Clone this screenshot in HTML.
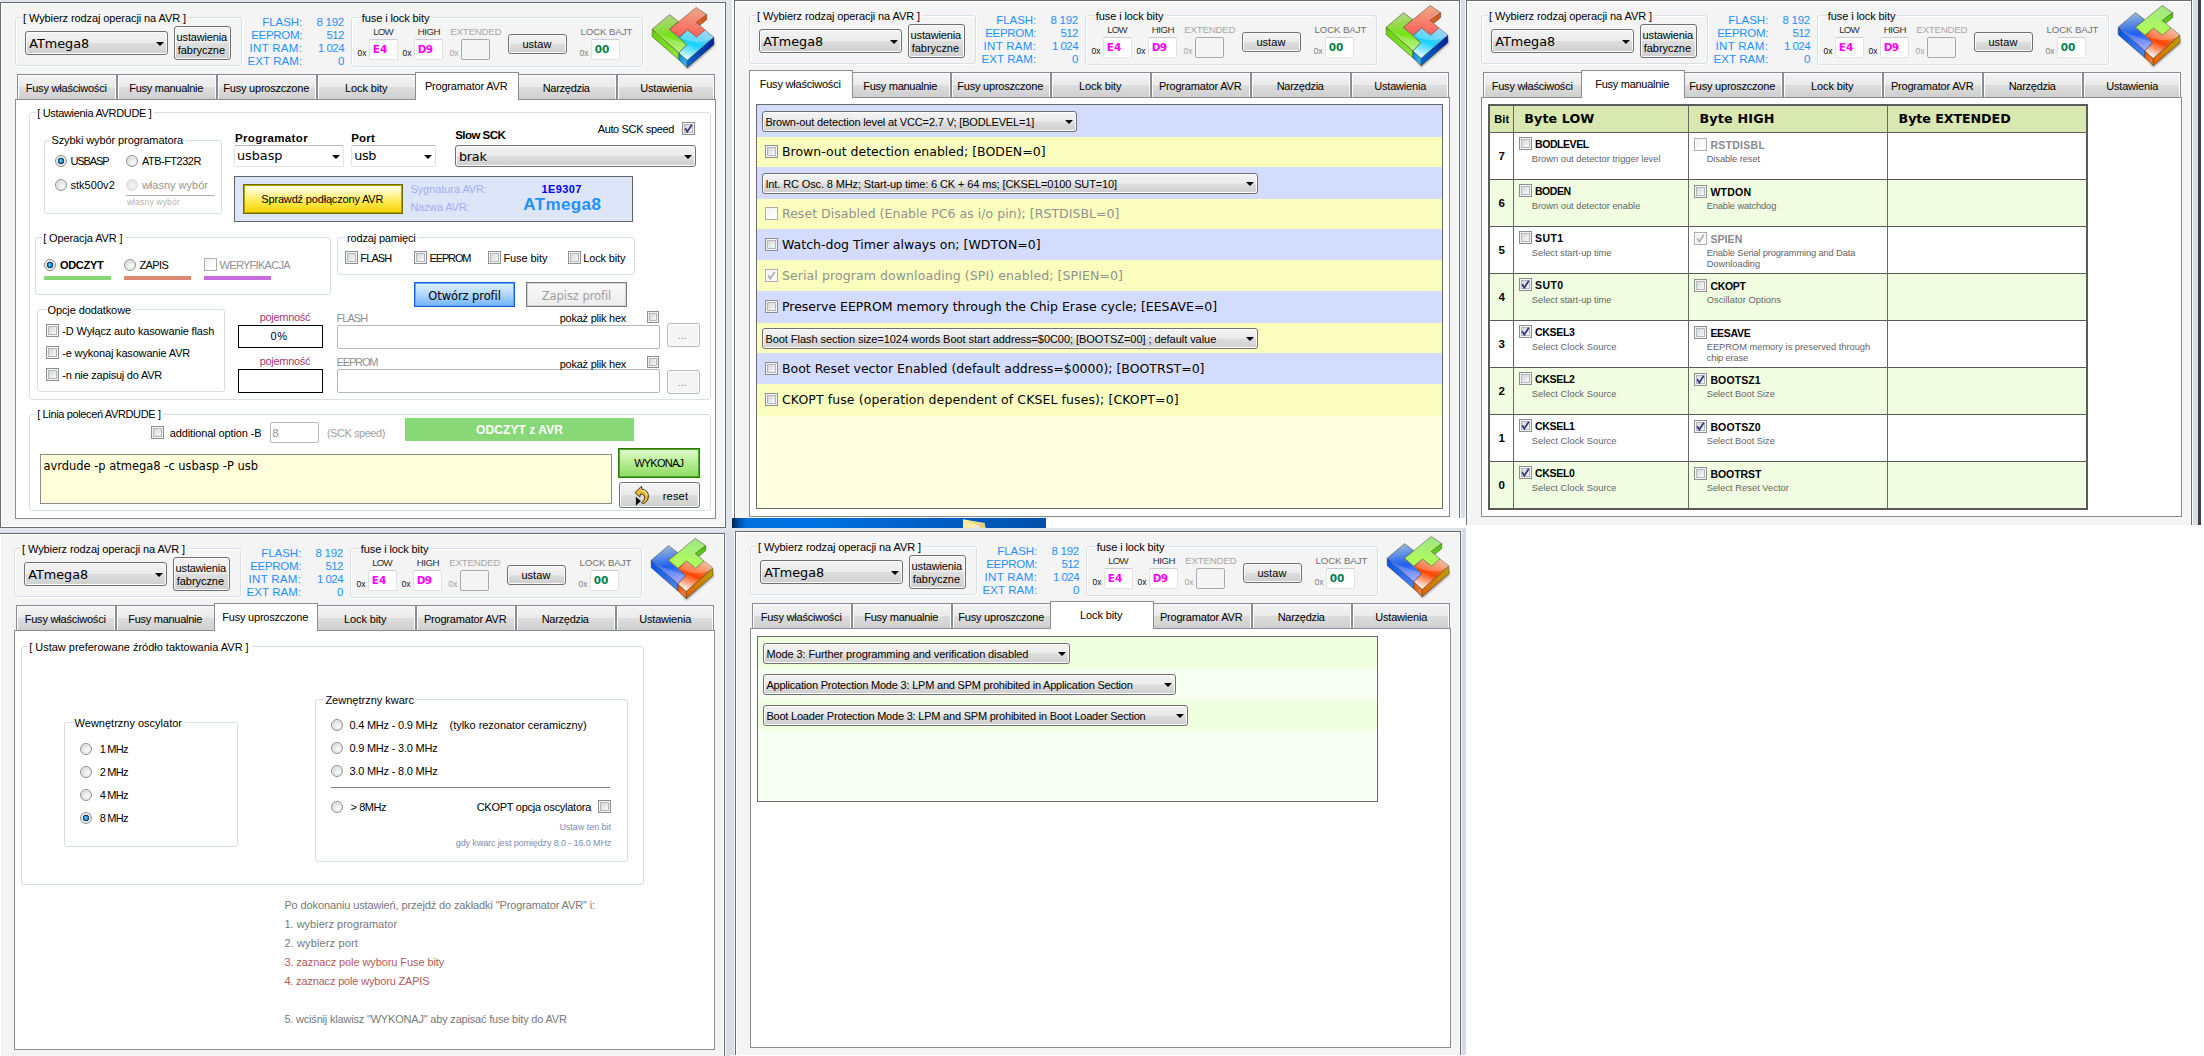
<!DOCTYPE html><html><head><meta charset="utf-8"><title>AVR fuse tool</title><style>html,body{margin:0;padding:0;background:#fff}
body{width:2204px;height:1056px;position:relative;overflow:hidden;font-family:"Liberation Sans",sans-serif;font-size:11px;color:#000}
div,span,i,svg{position:absolute;box-sizing:border-box}
.t{white-space:nowrap;line-height:20px;height:20px}
.win{background:#f4f4f4;overflow:hidden}
.winb{left:0;top:0;width:100%;border:1px solid #696d72;box-shadow:inset 1px 1px 0 #fff,inset -1px -1px 0 #fff}
.gb{border:1px solid #d5dfe5;border-radius:3px;box-shadow:inset 1px 1px 0 #fff,1px 1px 0 #fff}
.btn{border:1px solid #707070;border-radius:3px;background:linear-gradient(#f3f3f3 0%,#ebebeb 48%,#dddddd 52%,#cfcfcf 100%);box-shadow:inset 0 0 0 1px #fcfcfc}
.arr{width:0;height:0;margin-left:-.5px;border-left:4px solid transparent;border-right:4px solid transparent;border-top:4.5px solid #000}
.tabpanel{background:#fff;border:1px solid #898c95}
.tab{border:1px solid #898c95;border-bottom:none;background:linear-gradient(#f3f3f3 0%,#ebebeb 48%,#dddddd 52%,#cfcfcf 100%);box-shadow:inset 1px 1px 0 #fcfcfc,inset -1px 0 0 #fcfcfc}
.tab.act{background:#fff;box-shadow:none}
.hex{background:#fff;border:1px solid #dfe3e8;border-top-color:#c8ccd3;border-radius:2px}
.hex.dis{background:#f4f4f4;border-color:#a9a9a9}
.combo{background:#fff;border:1px solid #dfe4ea;border-top-color:#b3b8c2;border-radius:2px}
.inp{background:#fff;border:1px solid #b4b6ba;border-radius:2px}
.ybtn{border:1px solid #6f6a00;box-shadow:inset 0 0 0 1px #b4a400;background:linear-gradient(#fffef2 0%,#fff7b0 28%,#ffe94e 60%,#f0d000 100%)}
.bbtn{border:1px solid #1460d6;background:linear-gradient(#e0f0ff 0%,#b6daff 45%,#72b4fa 100%);box-shadow:inset 0 0 0 1px #5ea6f6}
.gbtn{border:1px solid #7c7c7c;background:linear-gradient(#fafafa,#ececec);box-shadow:inset 0 0 0 1px #cfcfcf}
.grbtn{border:1px solid #2c7c0a;box-shadow:inset 0 0 0 1px #52a824;background:linear-gradient(#e2f9d4 0%,#b6ec92 50%,#8cdc60 100%)}
.dbtn{background:#f4f4f4;border:1px solid #b6babe;border-radius:3px;box-shadow:inset 0 0 0 1px #fcfcfc}
.cb{width:13px;height:13px;border:1px solid #8e8f8f;background:linear-gradient(135deg,#cbced1 0%,#f9f9f9 85%);box-shadow:inset 0 0 0 1px #f4f4f4,inset 0 0 0 2px #b2b7bc}
.cb.s12{width:12px;height:12px}
.cb.dis{border-color:#adadad;background:linear-gradient(135deg,#efefef 0%,#fdfdfd 70%);box-shadow:inset 0 0 0 1px #fafafa}
.rb{width:12px;height:12px;border:1px solid #8e8f8f;border-radius:50%;background:radial-gradient(circle at 62% 62%,#fdfdfd 0%,#dcdee0 60%,#c2c5c8 100%);box-shadow:inset 0 0 0 1px #eeeeee}
.rb.on{background:radial-gradient(circle closest-side at 44% 40%,rgba(255,255,255,.75) 0,rgba(255,255,255,0) 24%),radial-gradient(circle closest-side at 50% 50%,#5cc4f0 0%,#27a2e0 26%,#1b78b2 42%,#0e3b5e 55%,#173f5a 64%,#f2f2f2 72%,#e0e3e6 100%)}
.rb.dis{border-color:#dcdcdc;background:radial-gradient(circle at 55% 60%,#f6f6f6 0%,#e6e6e6 60%,#dedede 100%);box-shadow:none}
</style></head><body><div style="left:0;top:0;width:732px;height:528px;background:#e0e4eb"></div>
<div style="left:0;top:528px;width:735px;height:528px;background:#d9dee7"></div>
<div style="left:0;top:528px;width:1466px;height:3px;background:#e0e4eb"></div>
<div style="left:725px;top:534px;width:1px;height:522px;background:#f4f6f8"></div>
<div style="left:734px;top:532px;width:1px;height:524px;background:#f4f6f8"></div>
<div style="left:1461px;top:0;width:4px;height:518px;background:#d8dee7"></div>
<div style="left:1461px;top:531px;width:1px;height:525px;background:#f2f4f7"></div><div style="left:1462px;top:528px;width:4px;height:528px;background:#d6dbe4"></div>
<div style="left:2193px;top:0;width:5px;height:525px;background:#d8dee7"></div>
<div style="left:2198px;top:0;width:3px;height:525px;background:#40424a"></div>
<div class="win" style="left:0px;top:2px;width:726px;height:526px"><div class="winb" style="height:526px"></div><div class="gb" style="left:15px;top:15px;width:227px;height:49px;"></div><div style="left:22px;top:14px;width:166px;height:4px;background:#f4f4f4;"></div><span class="t" style="left:23.00px;top:6.19px;font-family:'Liberation Sans',sans-serif;font-size:11px;letter-spacing:-0.09px">[ Wybierz rodzaj operacji na AVR ]</span><div class="btn" style="left:25px;top:29px;width:143px;height:24px;"></div><span class="t" style="left:29.20px;top:32.17px;font-family:'DejaVu Sans','Liberation Sans',sans-serif;font-size:12.8px;">ATmega8</span><i class="arr" style="left:156px;top:40px"></i><div class="btn" style="left:174px;top:24px;width:57px;height:34px;"></div><span class="t" style="left:176.60px;top:24.69px;font-family:'Liberation Sans',sans-serif;font-size:11px;letter-spacing:-0.16px">ustawienia</span><span class="t" style="left:177.80px;top:37.69px;font-family:'Liberation Sans',sans-serif;font-size:11px;letter-spacing:-0.06px">fabryczne</span><span class="t" style="left:262.20px;top:9.72px;font-family:'Liberation Sans',sans-serif;font-size:11.5px;color:#1e90ff;letter-spacing:-0.04px">FLASH:</span><span class="t" style="left:316.40px;top:9.72px;font-family:'Liberation Sans',sans-serif;font-size:11.5px;color:#1e90ff;letter-spacing:-0.24px">8 192</span><span class="t" style="left:251.20px;top:22.82px;font-family:'Liberation Sans',sans-serif;font-size:11.5px;color:#1e90ff;letter-spacing:-0.29px">EEPROM:</span><span class="t" style="left:326.40px;top:22.82px;font-family:'Liberation Sans',sans-serif;font-size:11.5px;color:#1e90ff;letter-spacing:-0.53px">512</span><span class="t" style="left:249.60px;top:35.92px;font-family:'Liberation Sans',sans-serif;font-size:11.5px;color:#1e90ff;letter-spacing:0.29px">INT RAM:</span><span class="t" style="left:318.00px;top:35.92px;font-family:'Liberation Sans',sans-serif;font-size:11.5px;color:#1e90ff;letter-spacing:-0.56px">1 024</span><span class="t" style="left:247.60px;top:49.02px;font-family:'Liberation Sans',sans-serif;font-size:11.5px;color:#1e90ff;letter-spacing:0.06px">EXT RAM:</span><span class="t" style="left:338.00px;top:49.02px;font-family:'Liberation Sans',sans-serif;font-size:11.5px;color:#1e90ff;letter-spacing:-0.41px">0</span><div class="gb" style="left:351px;top:15px;width:292px;height:50px;"></div><div style="left:360.8px;top:14px;width:70.5px;height:4px;background:#f4f4f4;"></div><span class="t" style="left:361.80px;top:6.19px;font-family:'Liberation Sans',sans-serif;font-size:11px;letter-spacing:-0.10px">fuse i lock bity</span><span class="t" style="left:373.20px;top:20.14px;font-family:'Liberation Sans',sans-serif;font-size:9.7px;color:#303030;letter-spacing:-0.76px">LOW</span><span class="t" style="left:417.70px;top:20.14px;font-family:'Liberation Sans',sans-serif;font-size:9.7px;color:#303030;letter-spacing:-0.43px">HIGH</span><span class="t" style="left:450.30px;top:20.14px;font-family:'Liberation Sans',sans-serif;font-size:9.7px;color:#a8a8a8;letter-spacing:-0.23px">EXTENDED</span><span class="t" style="left:580.50px;top:20.14px;font-family:'Liberation Sans',sans-serif;font-size:9.7px;color:#727272;letter-spacing:-0.12px">LOCK BAJT</span><div class="hex" style="left:369px;top:37px;width:29px;height:21px;"></div><span class="t" style="left:357.60px;top:40.55px;font-family:'Liberation Sans',sans-serif;font-size:8.5px;color:#101010;letter-spacing:-0.14px">0x</span><span class="t" style="left:372.70px;top:37.37px;font-family:'DejaVu Sans','Liberation Sans',sans-serif;font-size:10.5px;font-weight:700;color:#ff00ff;letter-spacing:0.06px">E4</span><div class="hex" style="left:414px;top:37px;width:29px;height:21px;"></div><span class="t" style="left:402.60px;top:40.55px;font-family:'Liberation Sans',sans-serif;font-size:8.5px;color:#101010;letter-spacing:-0.14px">0x</span><span class="t" style="left:417.70px;top:37.37px;font-family:'DejaVu Sans','Liberation Sans',sans-serif;font-size:10.5px;font-weight:700;color:#ff00ff;letter-spacing:-0.72px">D9</span><div class="hex dis" style="left:461px;top:37px;width:29px;height:21px;"></div><span class="t" style="left:449.60px;top:40.55px;font-family:'Liberation Sans',sans-serif;font-size:8.5px;color:#a4a4a4;letter-spacing:-0.14px">0x</span><div class="hex" style="left:591px;top:37px;width:29px;height:21px;"></div><span class="t" style="left:579.60px;top:40.55px;font-family:'Liberation Sans',sans-serif;font-size:8.5px;color:#808080;letter-spacing:-0.14px">0x</span><span class="t" style="left:594.70px;top:37.37px;font-family:'DejaVu Sans','Liberation Sans',sans-serif;font-size:10.5px;font-weight:700;color:#008050;letter-spacing:-0.01px">00</span><div class="btn" style="left:508px;top:32px;width:59px;height:20px;"></div><span class="t" style="left:522.40px;top:32.19px;font-family:'Liberation Sans',sans-serif;font-size:11px;letter-spacing:0.05px">ustaw</span><svg style="position:absolute;left:645px;top:0px" width="80" height="72" viewBox="0 0 1173 1056">
<defs>
<linearGradient id="lta" x1="0.45" y1="0" x2="0.55" y2="1"><stop offset="0" stop-color="#b9d48e"/><stop offset="0.55" stop-color="#74e214"/><stop offset="1" stop-color="#a6f26a"/></linearGradient>
<linearGradient id="lfa" x1="0" y1="0" x2="1" y2="1"><stop offset="0" stop-color="#62d400"/><stop offset="1" stop-color="#8fe640"/></linearGradient>
<linearGradient id="tta" x1="0.6" y1="0" x2="0.5" y2="1"><stop offset="0" stop-color="#eda886"/><stop offset="1" stop-color="#ff5f58"/></linearGradient>
<linearGradient id="tsa" x1="0" y1="0" x2="1" y2="0.3"><stop offset="0" stop-color="#e8742e"/><stop offset="1" stop-color="#d85010"/></linearGradient>
<linearGradient id="bta" x1="0.7" y1="0" x2="0.25" y2="1"><stop offset="0" stop-color="#8cc6ee"/><stop offset="0.5" stop-color="#16d2ff"/><stop offset="0.95" stop-color="#dff8ff"/></linearGradient>
<linearGradient id="bra" x1="1" y1="0" x2="0" y2="1"><stop offset="0" stop-color="#00189a"/><stop offset="1" stop-color="#0070d0"/></linearGradient>
<linearGradient id="bfa" x1="0" y1="0" x2="1" y2="1"><stop offset="0" stop-color="#0088dc"/><stop offset="1" stop-color="#48bdf2"/></linearGradient>
<filter id="sha" x="-10%" y="-10%" width="120%" height="125%"><feGaussianBlur stdDeviation="14"/></filter>
</defs>
<path d="M110 470 L497 815 L620 985 L1018 640 L1012 560 L620 900 L497 790 Z" fill="#000" opacity="0.4" filter="url(#sha)"/>
<g stroke="#3b3320" stroke-opacity="0.75" stroke-width="9" stroke-linejoin="round">
<path d="M105 400 L497 748 L497 850 L105 508 Z" fill="url(#lfa)"/>
<path d="M497 748 L620 855 L620 960 L497 850 Z" fill="url(#bfa)"/>
<path d="M620 855 L1010 515 L1010 625 L620 960 Z" fill="url(#bra)"/>
<path d="M105 400 L360 185 L492 287 L358 403 L612 628 L497 748 Z" fill="url(#lta)"/>
<path d="M500 515 L625 410 L755 515 L880 410 L1010 515 L620 855 L497 748 L612 628 Z" fill="url(#bta)"/>
<path d="M750 300 L905 185 L905 255 L812 338 Z" fill="url(#tsa)"/>
<path d="M360 400 L750 80 L905 185 L750 300 L880 410 L755 515 L625 410 L500 515 Z" fill="url(#tta)"/>
</g>
<path d="M130 440 Q400 560 600 615 L497 730 Z" fill="#fff" opacity="0.18"/>
<path d="M520 525 Q760 650 990 530 L1010 515 L880 410 L755 515 L625 410 Z" fill="#fff" opacity="0.22"/>
</svg><div class="tabpanel" style="left:15px;top:97px;width:701px;height:420px;"></div><div class="tab" style="left:17px;top:72px;width:100px;height:25px;"></div><span class="t" style="left:25.70px;top:75.79px;font-family:'Liberation Sans',sans-serif;font-size:11px;letter-spacing:-0.21px">Fusy właściwości</span><div class="tab" style="left:117px;top:72px;width:100px;height:25px;"></div><span class="t" style="left:129.30px;top:75.79px;font-family:'Liberation Sans',sans-serif;font-size:11px;letter-spacing:-0.28px">Fusy manualnie</span><div class="tab" style="left:217px;top:72px;width:100px;height:25px;"></div><span class="t" style="left:223.30px;top:75.79px;font-family:'Liberation Sans',sans-serif;font-size:11px;letter-spacing:-0.22px">Fusy uproszczone</span><div class="tab" style="left:317px;top:72px;width:100px;height:25px;"></div><span class="t" style="left:345.05px;top:75.79px;font-family:'Liberation Sans',sans-serif;font-size:11px;letter-spacing:-0.12px">Lock bity</span><div class="tab" style="left:517px;top:72px;width:100px;height:25px;"></div><span class="t" style="left:542.70px;top:75.79px;font-family:'Liberation Sans',sans-serif;font-size:11px;letter-spacing:-0.28px">Narzędzia</span><div class="tab" style="left:617px;top:72px;width:98px;height:25px;"></div><span class="t" style="left:640.35px;top:75.79px;font-family:'Liberation Sans',sans-serif;font-size:11px;letter-spacing:-0.21px">Ustawienia</span><div class="tab act" style="left:415px;top:70px;width:104px;height:28px;"></div><span class="t" style="left:424.90px;top:73.79px;font-family:'Liberation Sans',sans-serif;font-size:11px;letter-spacing:-0.19px">Programator AVR</span><div class="gb" style="left:29px;top:110px;width:682px;height:288px;"></div><div style="left:36.2px;top:109px;width:117.4px;height:4px;background:#fff;"></div><span class="t" style="left:37.20px;top:101.19px;font-family:'Liberation Sans',sans-serif;font-size:11px;letter-spacing:-0.32px">[ Ustawienia AVRDUDE ]</span><div class="gb" style="left:44px;top:138px;width:178px;height:74px;"></div><div style="left:50.4px;top:137px;width:134.7px;height:4px;background:#fff;"></div><span class="t" style="left:51.40px;top:128.49px;font-family:'Liberation Sans',sans-serif;font-size:11px;letter-spacing:-0.09px">Szybki wybór programatora</span><div class="rb on" style="left:55px;top:153px"></div><span class="t" style="left:70.40px;top:149.19px;font-family:'Liberation Sans',sans-serif;font-size:11px;letter-spacing:-1.11px">USBASP</span><div class="rb" style="left:126px;top:153px"></div><span class="t" style="left:141.90px;top:149.19px;font-family:'Liberation Sans',sans-serif;font-size:11px;letter-spacing:-0.50px">ATB-FT232R</span><div class="rb" style="left:55px;top:177px"></div><span class="t" style="left:70.40px;top:173.19px;font-family:'Liberation Sans',sans-serif;font-size:11px;letter-spacing:0.05px">stk500v2</span><div class="rb dis" style="left:126px;top:177px"></div><span class="t" style="left:141.90px;top:173.19px;font-family:'Liberation Sans',sans-serif;font-size:11px;color:#959595;">własny wybór</span><div style="left:126px;top:193px;width:89px;height:1px;background:#aeaeae;"></div><span class="t" style="left:126.90px;top:189.55px;font-family:'Liberation Sans',sans-serif;font-size:8.5px;color:#b4b4b4;letter-spacing:0.16px">własny wybór</span><span class="t" style="left:235.00px;top:126.02px;font-family:'Liberation Sans',sans-serif;font-size:11.5px;font-weight:700;letter-spacing:0.36px">Programator</span><div class="combo" style="left:234px;top:143px;width:110px;height:22px;"></div><span class="t" style="left:237.00px;top:144.07px;font-family:'DejaVu Sans','Liberation Sans',sans-serif;font-size:12.8px;letter-spacing:-0.02px">usbasp</span><i class="arr" style="left:332px;top:153px"></i><span class="t" style="left:351.30px;top:126.02px;font-family:'Liberation Sans',sans-serif;font-size:11.5px;font-weight:700;letter-spacing:0.15px">Port</span><div class="combo" style="left:351px;top:143px;width:85px;height:22px;"></div><span class="t" style="left:354.20px;top:144.07px;font-family:'DejaVu Sans','Liberation Sans',sans-serif;font-size:12.8px;letter-spacing:-0.30px">usb</span><i class="arr" style="left:424px;top:153px"></i><span class="t" style="left:455.20px;top:123.02px;font-family:'Liberation Sans',sans-serif;font-size:11.5px;font-weight:700;letter-spacing:-0.54px">Slow SCK</span><div class="btn" style="left:455px;top:143px;width:241px;height:22px;"></div><span class="t" style="left:458.90px;top:144.57px;font-family:'DejaVu Sans','Liberation Sans',sans-serif;font-size:12.8px;letter-spacing:-0.21px">brak</span><i class="arr" style="left:684px;top:153px"></i><span class="t" style="left:597.70px;top:116.89px;font-family:'Liberation Sans',sans-serif;font-size:11px;letter-spacing:-0.36px">Auto SCK speed</span><div class="cb" style="left:682px;top:120px"><svg width="13" height="13" viewBox="0 0 13 13" style="position:absolute;left:-1px;top:-1px"><path d="M3.2 6.2 L5.3 9.6 L9.8 2.8" fill="none" stroke="#31347c" stroke-width="1.7" stroke-linecap="butt"/></svg></div><div style="left:234px;top:174px;width:399px;height:46px;background:#dde6f8;border:1px solid #646464;"></div><div class="ybtn" style="left:243px;top:182px;width:160px;height:30px;"></div><span class="t" style="left:261.30px;top:187.19px;font-family:'Liberation Sans',sans-serif;font-size:11px;letter-spacing:-0.17px">Sprawdź podłączony AVR</span><span class="t" style="left:410.40px;top:177.19px;font-family:'Liberation Sans',sans-serif;font-size:11px;color:#a4acf0;letter-spacing:-0.06px">Sygnatura AVR:</span><span class="t" style="left:410.40px;top:195.19px;font-family:'Liberation Sans',sans-serif;font-size:11px;color:#a4acf0;letter-spacing:-0.21px">Nazwa AVR:</span><span class="t" style="left:541.50px;top:177.19px;font-family:'Liberation Sans',sans-serif;font-size:11px;font-weight:700;color:#0000ff;letter-spacing:0.38px">1E9307</span><span class="t" style="left:523.30px;top:193.31px;font-family:'Liberation Sans',sans-serif;font-size:17px;font-weight:700;color:#1e90ff;letter-spacing:0.39px">ATmega8</span><div class="gb" style="left:35px;top:235px;width:296px;height:58px;"></div><div style="left:42.2px;top:234px;width:82.3px;height:4px;background:#fff;"></div><span class="t" style="left:43.20px;top:226.19px;font-family:'Liberation Sans',sans-serif;font-size:11px;letter-spacing:-0.11px">[ Operacja AVR ]</span><div class="rb on" style="left:44px;top:257px"></div><span class="t" style="left:59.90px;top:253.19px;font-family:'Liberation Sans',sans-serif;font-size:11px;font-weight:700;letter-spacing:-0.29px">ODCZYT</span><div style="left:44px;top:274px;width:67px;height:4px;background:#86d674;"></div><div class="rb" style="left:124px;top:257px"></div><span class="t" style="left:139.50px;top:253.19px;font-family:'Liberation Sans',sans-serif;font-size:11px;letter-spacing:-0.62px">ZAPIS</span><div style="left:124px;top:274px;width:67px;height:4px;background:#dc8870;"></div><div class="cb dis" style="left:204px;top:256px"></div><span class="t" style="left:219.60px;top:253.19px;font-family:'Liberation Sans',sans-serif;font-size:11px;color:#909090;letter-spacing:-0.70px">WERYFIKACJA</span><div style="left:204px;top:274px;width:67px;height:4px;background:#c86ae0;"></div><div class="gb" style="left:337px;top:235px;width:298px;height:38px;"></div><div style="left:346.1px;top:234px;width:71.5px;height:4px;background:#fff;"></div><span class="t" style="left:347.10px;top:226.19px;font-family:'Liberation Sans',sans-serif;font-size:11px;letter-spacing:-0.17px">rodzaj pamięci</span><div class="cb" style="left:345px;top:249px"></div><span class="t" style="left:360.30px;top:246.19px;font-family:'Liberation Sans',sans-serif;font-size:11px;letter-spacing:-0.87px">FLASH</span><div class="cb" style="left:414px;top:249px"></div><span class="t" style="left:429.50px;top:246.19px;font-family:'Liberation Sans',sans-serif;font-size:11px;letter-spacing:-1.13px">EEPROM</span><div class="cb" style="left:488px;top:249px"></div><span class="t" style="left:503.40px;top:246.19px;font-family:'Liberation Sans',sans-serif;font-size:11px;letter-spacing:-0.08px">Fuse bity</span><div class="cb" style="left:568px;top:249px"></div><span class="t" style="left:583.30px;top:246.19px;font-family:'Liberation Sans',sans-serif;font-size:11px;letter-spacing:-0.15px">Lock bity</span><div class="bbtn" style="left:414px;top:280px;width:101px;height:25px;"></div><span class="t" style="left:428.25px;top:283.52px;font-family:'DejaVu Sans','Liberation Sans',sans-serif;font-size:11.5px;letter-spacing:-0.09px">Otwórz profil</span><div class="gbtn" style="left:526px;top:280px;width:101px;height:25px;"></div><span class="t" style="left:541.80px;top:283.52px;font-family:'DejaVu Sans','Liberation Sans',sans-serif;font-size:11.5px;color:#a0a0a0;letter-spacing:-0.07px">Zapisz profil</span><div class="gb" style="left:37px;top:307px;width:188px;height:83px;"></div><div style="left:46.5px;top:306px;width:86.5px;height:4px;background:#fff;"></div><span class="t" style="left:47.50px;top:298.19px;font-family:'Liberation Sans',sans-serif;font-size:11px;letter-spacing:-0.10px">Opcje dodatkowe</span><div class="cb" style="left:46px;top:322px"></div><span class="t" style="left:62.30px;top:319.19px;font-family:'Liberation Sans',sans-serif;font-size:11px;letter-spacing:-0.13px">-D Wyłącz auto kasowanie flash</span><div class="cb" style="left:46px;top:344px"></div><span class="t" style="left:62.30px;top:341.19px;font-family:'Liberation Sans',sans-serif;font-size:11px;letter-spacing:-0.17px">-e wykonaj kasowanie AVR</span><div class="cb" style="left:46px;top:366px"></div><span class="t" style="left:62.30px;top:363.19px;font-family:'Liberation Sans',sans-serif;font-size:11px;letter-spacing:-0.22px">-n nie zapisuj do AVR</span><span class="t" style="left:259.70px;top:305.19px;font-family:'Liberation Sans',sans-serif;font-size:11px;color:#a03878;letter-spacing:-0.29px">pojemność</span><div style="left:238px;top:323px;width:85px;height:23px;background:#fff;border:1px solid #000;"></div><span class="t" style="left:270.40px;top:324.49px;font-family:'Liberation Sans',sans-serif;font-size:11px;letter-spacing:0.75px">0%</span><span class="t" style="left:259.70px;top:349.49px;font-family:'Liberation Sans',sans-serif;font-size:11px;color:#a03878;letter-spacing:-0.29px">pojemność</span><div style="left:238px;top:367px;width:85px;height:24px;background:#fff;border:1px solid #000;"></div><span class="t" style="left:336.50px;top:306.19px;font-family:'Liberation Sans',sans-serif;font-size:11px;color:#909090;letter-spacing:-0.95px">FLASH</span><div class="inp" style="left:337px;top:323px;width:323px;height:24px;"></div><span class="t" style="left:559.70px;top:306.19px;font-family:'Liberation Sans',sans-serif;font-size:11px;letter-spacing:-0.24px">pokaż plik hex</span><div class="cb s12" style="left:647px;top:309px"></div><div class="dbtn" style="left:667px;top:321px;width:33px;height:24px;"></div><span class="t" style="left:677.50px;top:323.19px;font-family:'Liberation Sans',sans-serif;font-size:11px;color:#909090;letter-spacing:-0.06px">...</span><span class="t" style="left:336.50px;top:350.49px;font-family:'Liberation Sans',sans-serif;font-size:11px;color:#909090;letter-spacing:-1.13px">EEPROM</span><div class="inp" style="left:337px;top:367px;width:323px;height:24px;"></div><span class="t" style="left:559.70px;top:351.69px;font-family:'Liberation Sans',sans-serif;font-size:11px;letter-spacing:-0.24px">pokaż plik hex</span><div class="cb s12" style="left:647px;top:354px"></div><div class="dbtn" style="left:667px;top:368px;width:33px;height:24px;"></div><span class="t" style="left:677.50px;top:370.19px;font-family:'Liberation Sans',sans-serif;font-size:11px;color:#909090;letter-spacing:-0.06px">...</span><div class="gb" style="left:29px;top:412px;width:682px;height:97px;"></div><div style="left:36.2px;top:411px;width:126.6px;height:4px;background:#fff;"></div><span class="t" style="left:37.20px;top:402.19px;font-family:'Liberation Sans',sans-serif;font-size:11px;letter-spacing:-0.36px">[ Linia poleceń AVRDUDE ]</span><div class="cb" style="left:151px;top:424px"></div><span class="t" style="left:169.80px;top:420.89px;font-family:'Liberation Sans',sans-serif;font-size:11px;letter-spacing:-0.13px">additional option -B</span><div class="inp" style="left:270px;top:420px;width:49px;height:21px;"></div><span class="t" style="left:272.60px;top:420.89px;font-family:'Liberation Sans',sans-serif;font-size:11px;color:#909090;letter-spacing:-0.25px">8</span><span class="t" style="left:326.90px;top:420.89px;font-family:'Liberation Sans',sans-serif;font-size:11px;color:#a0a0a0;letter-spacing:-0.45px">(SCK speed)</span><div style="left:405px;top:416px;width:229px;height:23px;background:#88d878;"></div><span class="t" style="left:476.10px;top:417.84px;font-family:'Liberation Sans',sans-serif;font-size:12px;font-weight:700;color:#fff;letter-spacing:0.08px">ODCZYT z AVR</span><div style="left:40px;top:452px;width:572px;height:50px;background:#ffffdc;border:1px solid #8c8c8c;"></div><span class="t" style="left:43.40px;top:453.52px;font-family:'DejaVu Sans','Liberation Sans',sans-serif;font-size:11.5px;letter-spacing:-0.02px">avrdude -p atmega8 -c usbasp -P usb</span><div class="grbtn" style="left:618px;top:446px;width:82px;height:30px;"></div><span class="t" style="left:634.20px;top:451.19px;font-family:'Liberation Sans',sans-serif;font-size:11px;letter-spacing:-0.77px">WYKONAJ</span><div class="btn" style="left:619px;top:480px;width:81px;height:26px;"></div><svg style="position:absolute;left:633px;top:482px" width="18" height="23" viewBox="0 0 18 23"><path d="M8.6 2.2 L2.0 8.7 L6.8 12.8 L7.4 10.2 C10 9.6 12.2 11.4 11.6 14.2 C11.2 16.2 10 17.6 8.6 18.6 L10.4 19.6 C13.6 18.2 15.6 15.2 15.4 11.8 C15.2 8 12.4 5.4 8.8 5.2 Z" fill="#eeb838" stroke="#2c2410" stroke-width="0.9" stroke-linejoin="round"/><path d="M7.6 6.4 C11 6.2 13.6 8.4 14 11.4" fill="none" stroke="#fbe6a0" stroke-width="1.2"/><path d="M2.9 12.8 L2.9 21.7 L7.9 17 Z" fill="#0a0a0a"/></svg><span class="t" style="left:662.70px;top:483.69px;font-family:'Liberation Sans',sans-serif;font-size:11px;letter-spacing:0.21px">reset</span></div><div class="win" style="left:734px;top:0px;width:726px;height:518px"><div class="winb" style="height:526px"></div><div class="gb" style="left:15px;top:15px;width:227px;height:49px;"></div><div style="left:22px;top:14px;width:166px;height:4px;background:#f4f4f4;"></div><span class="t" style="left:23.00px;top:6.19px;font-family:'Liberation Sans',sans-serif;font-size:11px;letter-spacing:-0.09px">[ Wybierz rodzaj operacji na AVR ]</span><div class="btn" style="left:25px;top:29px;width:143px;height:24px;"></div><span class="t" style="left:29.20px;top:32.17px;font-family:'DejaVu Sans','Liberation Sans',sans-serif;font-size:12.8px;">ATmega8</span><i class="arr" style="left:156px;top:40px"></i><div class="btn" style="left:174px;top:24px;width:57px;height:34px;"></div><span class="t" style="left:176.60px;top:24.69px;font-family:'Liberation Sans',sans-serif;font-size:11px;letter-spacing:-0.16px">ustawienia</span><span class="t" style="left:177.80px;top:37.69px;font-family:'Liberation Sans',sans-serif;font-size:11px;letter-spacing:-0.06px">fabryczne</span><span class="t" style="left:262.20px;top:9.72px;font-family:'Liberation Sans',sans-serif;font-size:11.5px;color:#1e90ff;letter-spacing:-0.04px">FLASH:</span><span class="t" style="left:316.40px;top:9.72px;font-family:'Liberation Sans',sans-serif;font-size:11.5px;color:#1e90ff;letter-spacing:-0.24px">8 192</span><span class="t" style="left:251.20px;top:22.82px;font-family:'Liberation Sans',sans-serif;font-size:11.5px;color:#1e90ff;letter-spacing:-0.29px">EEPROM:</span><span class="t" style="left:326.40px;top:22.82px;font-family:'Liberation Sans',sans-serif;font-size:11.5px;color:#1e90ff;letter-spacing:-0.53px">512</span><span class="t" style="left:249.60px;top:35.92px;font-family:'Liberation Sans',sans-serif;font-size:11.5px;color:#1e90ff;letter-spacing:0.29px">INT RAM:</span><span class="t" style="left:318.00px;top:35.92px;font-family:'Liberation Sans',sans-serif;font-size:11.5px;color:#1e90ff;letter-spacing:-0.56px">1 024</span><span class="t" style="left:247.60px;top:49.02px;font-family:'Liberation Sans',sans-serif;font-size:11.5px;color:#1e90ff;letter-spacing:0.06px">EXT RAM:</span><span class="t" style="left:338.00px;top:49.02px;font-family:'Liberation Sans',sans-serif;font-size:11.5px;color:#1e90ff;letter-spacing:-0.41px">0</span><div class="gb" style="left:351px;top:15px;width:292px;height:50px;"></div><div style="left:360.8px;top:14px;width:70.5px;height:4px;background:#f4f4f4;"></div><span class="t" style="left:361.80px;top:6.19px;font-family:'Liberation Sans',sans-serif;font-size:11px;letter-spacing:-0.10px">fuse i lock bity</span><span class="t" style="left:373.20px;top:20.14px;font-family:'Liberation Sans',sans-serif;font-size:9.7px;color:#303030;letter-spacing:-0.76px">LOW</span><span class="t" style="left:417.70px;top:20.14px;font-family:'Liberation Sans',sans-serif;font-size:9.7px;color:#303030;letter-spacing:-0.43px">HIGH</span><span class="t" style="left:450.30px;top:20.14px;font-family:'Liberation Sans',sans-serif;font-size:9.7px;color:#a8a8a8;letter-spacing:-0.23px">EXTENDED</span><span class="t" style="left:580.50px;top:20.14px;font-family:'Liberation Sans',sans-serif;font-size:9.7px;color:#727272;letter-spacing:-0.12px">LOCK BAJT</span><div class="hex" style="left:369px;top:37px;width:29px;height:21px;"></div><span class="t" style="left:357.60px;top:40.55px;font-family:'Liberation Sans',sans-serif;font-size:8.5px;color:#101010;letter-spacing:-0.14px">0x</span><span class="t" style="left:372.70px;top:37.37px;font-family:'DejaVu Sans','Liberation Sans',sans-serif;font-size:10.5px;font-weight:700;color:#ff00ff;letter-spacing:0.06px">E4</span><div class="hex" style="left:414px;top:37px;width:29px;height:21px;"></div><span class="t" style="left:402.60px;top:40.55px;font-family:'Liberation Sans',sans-serif;font-size:8.5px;color:#101010;letter-spacing:-0.14px">0x</span><span class="t" style="left:417.70px;top:37.37px;font-family:'DejaVu Sans','Liberation Sans',sans-serif;font-size:10.5px;font-weight:700;color:#ff00ff;letter-spacing:-0.72px">D9</span><div class="hex dis" style="left:461px;top:37px;width:29px;height:21px;"></div><span class="t" style="left:449.60px;top:40.55px;font-family:'Liberation Sans',sans-serif;font-size:8.5px;color:#a4a4a4;letter-spacing:-0.14px">0x</span><div class="hex" style="left:591px;top:37px;width:29px;height:21px;"></div><span class="t" style="left:579.60px;top:40.55px;font-family:'Liberation Sans',sans-serif;font-size:8.5px;color:#808080;letter-spacing:-0.14px">0x</span><span class="t" style="left:594.70px;top:37.37px;font-family:'DejaVu Sans','Liberation Sans',sans-serif;font-size:10.5px;font-weight:700;color:#008050;letter-spacing:-0.01px">00</span><div class="btn" style="left:508px;top:32px;width:59px;height:20px;"></div><span class="t" style="left:522.40px;top:32.19px;font-family:'Liberation Sans',sans-serif;font-size:11px;letter-spacing:0.05px">ustaw</span><svg style="position:absolute;left:645px;top:0px" width="80" height="72" viewBox="0 0 1173 1056">
<defs>
<linearGradient id="ltb" x1="0.45" y1="0" x2="0.55" y2="1"><stop offset="0" stop-color="#b9d48e"/><stop offset="0.55" stop-color="#74e214"/><stop offset="1" stop-color="#a6f26a"/></linearGradient>
<linearGradient id="lfb" x1="0" y1="0" x2="1" y2="1"><stop offset="0" stop-color="#62d400"/><stop offset="1" stop-color="#8fe640"/></linearGradient>
<linearGradient id="ttb" x1="0.6" y1="0" x2="0.5" y2="1"><stop offset="0" stop-color="#eda886"/><stop offset="1" stop-color="#ff5f58"/></linearGradient>
<linearGradient id="tsb" x1="0" y1="0" x2="1" y2="0.3"><stop offset="0" stop-color="#e8742e"/><stop offset="1" stop-color="#d85010"/></linearGradient>
<linearGradient id="btb" x1="0.7" y1="0" x2="0.25" y2="1"><stop offset="0" stop-color="#8cc6ee"/><stop offset="0.5" stop-color="#16d2ff"/><stop offset="0.95" stop-color="#dff8ff"/></linearGradient>
<linearGradient id="brb" x1="1" y1="0" x2="0" y2="1"><stop offset="0" stop-color="#00189a"/><stop offset="1" stop-color="#0070d0"/></linearGradient>
<linearGradient id="bfb" x1="0" y1="0" x2="1" y2="1"><stop offset="0" stop-color="#0088dc"/><stop offset="1" stop-color="#48bdf2"/></linearGradient>
<filter id="shb" x="-10%" y="-10%" width="120%" height="125%"><feGaussianBlur stdDeviation="14"/></filter>
</defs>
<path d="M110 470 L497 815 L620 985 L1018 640 L1012 560 L620 900 L497 790 Z" fill="#000" opacity="0.4" filter="url(#shb)"/>
<g stroke="#3b3320" stroke-opacity="0.75" stroke-width="9" stroke-linejoin="round">
<path d="M105 400 L497 748 L497 850 L105 508 Z" fill="url(#lfb)"/>
<path d="M497 748 L620 855 L620 960 L497 850 Z" fill="url(#bfb)"/>
<path d="M620 855 L1010 515 L1010 625 L620 960 Z" fill="url(#brb)"/>
<path d="M105 400 L360 185 L492 287 L358 403 L612 628 L497 748 Z" fill="url(#ltb)"/>
<path d="M500 515 L625 410 L755 515 L880 410 L1010 515 L620 855 L497 748 L612 628 Z" fill="url(#btb)"/>
<path d="M750 300 L905 185 L905 255 L812 338 Z" fill="url(#tsb)"/>
<path d="M360 400 L750 80 L905 185 L750 300 L880 410 L755 515 L625 410 L500 515 Z" fill="url(#ttb)"/>
</g>
<path d="M130 440 Q400 560 600 615 L497 730 Z" fill="#fff" opacity="0.18"/>
<path d="M520 525 Q760 650 990 530 L1010 515 L880 410 L755 515 L625 410 Z" fill="#fff" opacity="0.22"/>
</svg><div class="tabpanel" style="left:15px;top:97px;width:701px;height:420px;"></div><div class="tab" style="left:117px;top:72px;width:100px;height:25px;"></div><span class="t" style="left:129.30px;top:75.79px;font-family:'Liberation Sans',sans-serif;font-size:11px;letter-spacing:-0.28px">Fusy manualnie</span><div class="tab" style="left:217px;top:72px;width:100px;height:25px;"></div><span class="t" style="left:223.30px;top:75.79px;font-family:'Liberation Sans',sans-serif;font-size:11px;letter-spacing:-0.22px">Fusy uproszczone</span><div class="tab" style="left:317px;top:72px;width:100px;height:25px;"></div><span class="t" style="left:345.05px;top:75.79px;font-family:'Liberation Sans',sans-serif;font-size:11px;letter-spacing:-0.12px">Lock bity</span><div class="tab" style="left:417px;top:72px;width:100px;height:25px;"></div><span class="t" style="left:424.90px;top:75.79px;font-family:'Liberation Sans',sans-serif;font-size:11px;letter-spacing:-0.19px">Programator AVR</span><div class="tab" style="left:517px;top:72px;width:100px;height:25px;"></div><span class="t" style="left:542.70px;top:75.79px;font-family:'Liberation Sans',sans-serif;font-size:11px;letter-spacing:-0.28px">Narzędzia</span><div class="tab" style="left:617px;top:72px;width:98px;height:25px;"></div><span class="t" style="left:640.35px;top:75.79px;font-family:'Liberation Sans',sans-serif;font-size:11px;letter-spacing:-0.21px">Ustawienia</span><div class="tab act" style="left:15px;top:70px;width:104px;height:28px;"></div><span class="t" style="left:25.70px;top:73.79px;font-family:'Liberation Sans',sans-serif;font-size:11px;letter-spacing:-0.21px">Fusy właściwości</span><div style="left:22px;top:104px;width:687px;height:405px;border:1px solid #696969;background:#ffffe1;box-sizing:border-box;"></div><div style="left:23px;top:105px;width:685px;height:32px;background:#d4dcfd;"></div><div style="left:23px;top:137px;width:685px;height:30px;background:#faffbe;"></div><div style="left:23px;top:167px;width:685px;height:32px;background:#d4dcfd;"></div><div style="left:23px;top:199px;width:685px;height:30px;background:#faffbe;"></div><div style="left:23px;top:229px;width:685px;height:31px;background:#d4dcfd;"></div><div style="left:23px;top:260px;width:685px;height:31px;background:#faffbe;"></div><div style="left:23px;top:291px;width:685px;height:32px;background:#d4dcfd;"></div><div style="left:23px;top:323px;width:685px;height:30px;background:#faffbe;"></div><div style="left:23px;top:353px;width:685px;height:31px;background:#d4dcfd;"></div><div style="left:23px;top:384px;width:685px;height:32px;background:#faffbe;"></div><div class="btn" style="left:28px;top:111px;width:315px;height:21px;"></div><span class="t" style="left:31.40px;top:112.19px;font-family:'Liberation Sans',sans-serif;font-size:11px;letter-spacing:-0.15px">Brown-out detection level at VCC=2.7 V; [BODLEVEL=1]</span><i class="arr" style="left:331px;top:120px"></i><div class="cb" style="left:31px;top:145px"></div><span class="t" style="left:48.00px;top:141.68px;font-family:'DejaVu Sans','Liberation Sans',sans-serif;font-size:12.5px;letter-spacing:0.01px">Brown-out detection enabled; [BODEN=0]</span><div class="btn" style="left:28px;top:173px;width:496px;height:21px;"></div><span class="t" style="left:31.40px;top:174.19px;font-family:'Liberation Sans',sans-serif;font-size:11px;letter-spacing:-0.12px">Int. RC Osc. 8 MHz; Start-up time: 6 CK + 64 ms; [CKSEL=0100 SUT=10]</span><i class="arr" style="left:512px;top:182px"></i><div class="cb dis" style="left:31px;top:207px"></div><span class="t" style="left:48.00px;top:203.68px;font-family:'DejaVu Sans','Liberation Sans',sans-serif;font-size:12.5px;color:#919191;letter-spacing:0.03px">Reset Disabled (Enable PC6 as i/o pin); [RSTDISBL=0]</span><div class="cb" style="left:31px;top:238px"></div><span class="t" style="left:48.00px;top:234.68px;font-family:'DejaVu Sans','Liberation Sans',sans-serif;font-size:12.5px;letter-spacing:0.01px">Watch-dog Timer always on; [WDTON=0]</span><div class="cb dis" style="left:31px;top:269px"><svg width="13" height="13" viewBox="0 0 13 13" style="position:absolute;left:-1px;top:-1px"><path d="M3.2 6.2 L5.3 9.6 L9.8 2.8" fill="none" stroke="#a9acb4" stroke-width="1.7" stroke-linecap="butt"/></svg></div><span class="t" style="left:48.00px;top:265.68px;font-family:'DejaVu Sans','Liberation Sans',sans-serif;font-size:12.5px;color:#919191;letter-spacing:0.09px">Serial program downloading (SPI) enabled; [SPIEN=0]</span><div class="cb" style="left:31px;top:300px"></div><span class="t" style="left:48.00px;top:296.68px;font-family:'DejaVu Sans','Liberation Sans',sans-serif;font-size:12.5px;letter-spacing:-0.02px">Preserve EEPROM memory through the Chip Erase cycle; [EESAVE=0]</span><div class="btn" style="left:28px;top:328px;width:496px;height:21px;"></div><span class="t" style="left:31.40px;top:329.19px;font-family:'Liberation Sans',sans-serif;font-size:11px;letter-spacing:-0.05px">Boot Flash section size=1024 words Boot start address=$0C00; [BOOTSZ=00] ; default value</span><i class="arr" style="left:512px;top:337px"></i><div class="cb" style="left:31px;top:362px"></div><span class="t" style="left:48.00px;top:358.68px;font-family:'DejaVu Sans','Liberation Sans',sans-serif;font-size:12.5px;letter-spacing:-0.01px">Boot Reset vector Enabled (default address=$0000); [BOOTRST=0]</span><div class="cb" style="left:31px;top:393px"></div><span class="t" style="left:48.00px;top:389.68px;font-family:'DejaVu Sans','Liberation Sans',sans-serif;font-size:12.5px;letter-spacing:0.09px">CKOPT fuse (operation dependent of CKSEL fuses); [CKOPT=0]</span></div><div class="win" style="left:1466px;top:0px;width:726px;height:525px"><div class="winb" style="height:527px"></div><div class="gb" style="left:15px;top:15px;width:227px;height:49px;"></div><div style="left:22px;top:14px;width:166px;height:4px;background:#f4f4f4;"></div><span class="t" style="left:23.00px;top:6.19px;font-family:'Liberation Sans',sans-serif;font-size:11px;letter-spacing:-0.09px">[ Wybierz rodzaj operacji na AVR ]</span><div class="btn" style="left:25px;top:29px;width:143px;height:24px;"></div><span class="t" style="left:29.20px;top:32.17px;font-family:'DejaVu Sans','Liberation Sans',sans-serif;font-size:12.8px;">ATmega8</span><i class="arr" style="left:156px;top:40px"></i><div class="btn" style="left:174px;top:24px;width:57px;height:34px;"></div><span class="t" style="left:176.60px;top:24.69px;font-family:'Liberation Sans',sans-serif;font-size:11px;letter-spacing:-0.16px">ustawienia</span><span class="t" style="left:177.80px;top:37.69px;font-family:'Liberation Sans',sans-serif;font-size:11px;letter-spacing:-0.06px">fabryczne</span><span class="t" style="left:262.20px;top:9.72px;font-family:'Liberation Sans',sans-serif;font-size:11.5px;color:#1e90ff;letter-spacing:-0.04px">FLASH:</span><span class="t" style="left:316.40px;top:9.72px;font-family:'Liberation Sans',sans-serif;font-size:11.5px;color:#1e90ff;letter-spacing:-0.24px">8 192</span><span class="t" style="left:251.20px;top:22.82px;font-family:'Liberation Sans',sans-serif;font-size:11.5px;color:#1e90ff;letter-spacing:-0.29px">EEPROM:</span><span class="t" style="left:326.40px;top:22.82px;font-family:'Liberation Sans',sans-serif;font-size:11.5px;color:#1e90ff;letter-spacing:-0.53px">512</span><span class="t" style="left:249.60px;top:35.92px;font-family:'Liberation Sans',sans-serif;font-size:11.5px;color:#1e90ff;letter-spacing:0.29px">INT RAM:</span><span class="t" style="left:318.00px;top:35.92px;font-family:'Liberation Sans',sans-serif;font-size:11.5px;color:#1e90ff;letter-spacing:-0.56px">1 024</span><span class="t" style="left:247.60px;top:49.02px;font-family:'Liberation Sans',sans-serif;font-size:11.5px;color:#1e90ff;letter-spacing:0.06px">EXT RAM:</span><span class="t" style="left:338.00px;top:49.02px;font-family:'Liberation Sans',sans-serif;font-size:11.5px;color:#1e90ff;letter-spacing:-0.41px">0</span><div class="gb" style="left:351px;top:15px;width:292px;height:50px;"></div><div style="left:360.8px;top:14px;width:70.5px;height:4px;background:#f4f4f4;"></div><span class="t" style="left:361.80px;top:6.19px;font-family:'Liberation Sans',sans-serif;font-size:11px;letter-spacing:-0.10px">fuse i lock bity</span><span class="t" style="left:373.20px;top:20.14px;font-family:'Liberation Sans',sans-serif;font-size:9.7px;color:#303030;letter-spacing:-0.76px">LOW</span><span class="t" style="left:417.70px;top:20.14px;font-family:'Liberation Sans',sans-serif;font-size:9.7px;color:#303030;letter-spacing:-0.43px">HIGH</span><span class="t" style="left:450.30px;top:20.14px;font-family:'Liberation Sans',sans-serif;font-size:9.7px;color:#a8a8a8;letter-spacing:-0.23px">EXTENDED</span><span class="t" style="left:580.50px;top:20.14px;font-family:'Liberation Sans',sans-serif;font-size:9.7px;color:#727272;letter-spacing:-0.12px">LOCK BAJT</span><div class="hex" style="left:369px;top:37px;width:29px;height:21px;"></div><span class="t" style="left:357.60px;top:40.55px;font-family:'Liberation Sans',sans-serif;font-size:8.5px;color:#101010;letter-spacing:-0.14px">0x</span><span class="t" style="left:372.70px;top:37.37px;font-family:'DejaVu Sans','Liberation Sans',sans-serif;font-size:10.5px;font-weight:700;color:#ff00ff;letter-spacing:0.06px">E4</span><div class="hex" style="left:414px;top:37px;width:29px;height:21px;"></div><span class="t" style="left:402.60px;top:40.55px;font-family:'Liberation Sans',sans-serif;font-size:8.5px;color:#101010;letter-spacing:-0.14px">0x</span><span class="t" style="left:417.70px;top:37.37px;font-family:'DejaVu Sans','Liberation Sans',sans-serif;font-size:10.5px;font-weight:700;color:#ff00ff;letter-spacing:-0.72px">D9</span><div class="hex dis" style="left:461px;top:37px;width:29px;height:21px;"></div><span class="t" style="left:449.60px;top:40.55px;font-family:'Liberation Sans',sans-serif;font-size:8.5px;color:#a4a4a4;letter-spacing:-0.14px">0x</span><div class="hex" style="left:591px;top:37px;width:29px;height:21px;"></div><span class="t" style="left:579.60px;top:40.55px;font-family:'Liberation Sans',sans-serif;font-size:8.5px;color:#808080;letter-spacing:-0.14px">0x</span><span class="t" style="left:594.70px;top:37.37px;font-family:'DejaVu Sans','Liberation Sans',sans-serif;font-size:10.5px;font-weight:700;color:#008050;letter-spacing:-0.01px">00</span><div class="btn" style="left:508px;top:32px;width:59px;height:20px;"></div><span class="t" style="left:522.40px;top:32.19px;font-family:'Liberation Sans',sans-serif;font-size:11px;letter-spacing:0.05px">ustaw</span><svg style="position:absolute;left:645px;top:0px" width="80" height="72" viewBox="0 0 1173 1056">
<defs>
<linearGradient id="ltc" x1="0.45" y1="0" x2="0.55" y2="1"><stop offset="0" stop-color="#9dbcd8"/><stop offset="0.55" stop-color="#1e60f2"/><stop offset="1" stop-color="#9c9cff"/></linearGradient>
<linearGradient id="lfc" x1="0" y1="0" x2="1" y2="1"><stop offset="0" stop-color="#0050e6"/><stop offset="1" stop-color="#4a86f2"/></linearGradient>
<linearGradient id="ttc" x1="0.6" y1="0" x2="0.5" y2="1"><stop offset="0" stop-color="#9ee688"/><stop offset="1" stop-color="#b2ff52"/></linearGradient>
<linearGradient id="tsc" x1="0" y1="0" x2="1" y2="0.3"><stop offset="0" stop-color="#6ae020"/><stop offset="1" stop-color="#48c808"/></linearGradient>
<linearGradient id="btc" x1="0.7" y1="0" x2="0.25" y2="1"><stop offset="0" stop-color="#eeb088"/><stop offset="0.5" stop-color="#ff4400"/><stop offset="0.95" stop-color="#fff0e8"/></linearGradient>
<linearGradient id="brc" x1="1" y1="0" x2="0" y2="1"><stop offset="0" stop-color="#b8a400"/><stop offset="1" stop-color="#e86000"/></linearGradient>
<linearGradient id="bfc" x1="0" y1="0" x2="1" y2="1"><stop offset="0" stop-color="#e25400"/><stop offset="1" stop-color="#f28848"/></linearGradient>
<filter id="shc" x="-10%" y="-10%" width="120%" height="125%"><feGaussianBlur stdDeviation="14"/></filter>
</defs>
<path d="M110 470 L497 815 L620 985 L1018 640 L1012 560 L620 900 L497 790 Z" fill="#000" opacity="0.4" filter="url(#shc)"/>
<g stroke="#3b3320" stroke-opacity="0.75" stroke-width="9" stroke-linejoin="round">
<path d="M105 400 L497 748 L497 850 L105 508 Z" fill="url(#lfc)"/>
<path d="M497 748 L620 855 L620 960 L497 850 Z" fill="url(#bfc)"/>
<path d="M620 855 L1010 515 L1010 625 L620 960 Z" fill="url(#brc)"/>
<path d="M105 400 L360 185 L492 287 L358 403 L612 628 L497 748 Z" fill="url(#ltc)"/>
<path d="M500 515 L625 410 L755 515 L880 410 L1010 515 L620 855 L497 748 L612 628 Z" fill="url(#btc)"/>
<path d="M750 300 L905 185 L905 255 L812 338 Z" fill="url(#tsc)"/>
<path d="M360 400 L750 80 L905 185 L750 300 L880 410 L755 515 L625 410 L500 515 Z" fill="url(#ttc)"/>
</g>
<path d="M130 440 Q400 560 600 615 L497 730 Z" fill="#fff" opacity="0.18"/>
<path d="M520 525 Q760 650 990 530 L1010 515 L880 410 L755 515 L625 410 Z" fill="#fff" opacity="0.22"/>
</svg><div class="tabpanel" style="left:15px;top:97px;width:701px;height:420px;"></div><div class="tab" style="left:17px;top:72px;width:100px;height:25px;"></div><span class="t" style="left:25.70px;top:75.79px;font-family:'Liberation Sans',sans-serif;font-size:11px;letter-spacing:-0.21px">Fusy właściwości</span><div class="tab" style="left:217px;top:72px;width:100px;height:25px;"></div><span class="t" style="left:223.30px;top:75.79px;font-family:'Liberation Sans',sans-serif;font-size:11px;letter-spacing:-0.22px">Fusy uproszczone</span><div class="tab" style="left:317px;top:72px;width:100px;height:25px;"></div><span class="t" style="left:345.05px;top:75.79px;font-family:'Liberation Sans',sans-serif;font-size:11px;letter-spacing:-0.12px">Lock bity</span><div class="tab" style="left:417px;top:72px;width:100px;height:25px;"></div><span class="t" style="left:424.90px;top:75.79px;font-family:'Liberation Sans',sans-serif;font-size:11px;letter-spacing:-0.19px">Programator AVR</span><div class="tab" style="left:517px;top:72px;width:100px;height:25px;"></div><span class="t" style="left:542.70px;top:75.79px;font-family:'Liberation Sans',sans-serif;font-size:11px;letter-spacing:-0.28px">Narzędzia</span><div class="tab" style="left:617px;top:72px;width:98px;height:25px;"></div><span class="t" style="left:640.35px;top:75.79px;font-family:'Liberation Sans',sans-serif;font-size:11px;letter-spacing:-0.21px">Ustawienia</span><div class="tab act" style="left:115px;top:70px;width:104px;height:28px;"></div><span class="t" style="left:129.30px;top:73.79px;font-family:'Liberation Sans',sans-serif;font-size:11px;letter-spacing:-0.28px">Fusy manualnie</span><div style="left:22px;top:104px;width:600px;height:406px;background:#fff;border:2px solid #5a5a5a;box-sizing:border-box;"></div><div style="left:24px;top:106px;width:596px;height:26px;background:#d8e8b0;"></div><div style="left:24px;top:132px;width:596px;height:1px;background:#5a5a5a;"></div><div style="left:24px;top:179px;width:596px;height:1px;background:#5a5a5a;"></div><span class="t" style="left:-164.50px;width:400px;text-align:center;top:146.32px;font-family:'Liberation Sans',sans-serif;font-size:11.5px;font-weight:700;letter-spacing:-0.25px">7</span><div class="cb" style="left:53px;top:137px"></div><span class="t" style="left:69.00px;top:133.96px;font-family:'Liberation Sans',sans-serif;font-size:10.5px;font-weight:700;letter-spacing:-0.43px">BODLEVEL</span><span class="t" style="left:65.80px;top:149.08px;font-family:'Liberation Sans',sans-serif;font-size:9.3px;color:#646464;">Brown out detector trigger level</span><div class="cb dis" style="left:228px;top:138px"></div><span class="t" style="left:244.40px;top:134.96px;font-family:'Liberation Sans',sans-serif;font-size:10.5px;font-weight:700;color:#8a8a8a;letter-spacing:0.28px">RSTDISBL</span><span class="t" style="left:240.70px;top:149.08px;font-family:'Liberation Sans',sans-serif;font-size:9.3px;color:#646464;letter-spacing:-0.07px">Disable reset</span><div style="left:24px;top:180px;width:596px;height:46px;background:#f0fde0;"></div><div style="left:24px;top:226px;width:596px;height:1px;background:#5a5a5a;"></div><span class="t" style="left:-164.50px;width:400px;text-align:center;top:193.32px;font-family:'Liberation Sans',sans-serif;font-size:11.5px;font-weight:700;letter-spacing:-0.25px">6</span><div class="cb" style="left:53px;top:184px"></div><span class="t" style="left:69.00px;top:180.96px;font-family:'Liberation Sans',sans-serif;font-size:10.5px;font-weight:700;letter-spacing:-0.46px">BODEN</span><span class="t" style="left:65.80px;top:196.08px;font-family:'Liberation Sans',sans-serif;font-size:9.3px;color:#646464;">Brown out detector enable</span><div class="cb" style="left:228px;top:185px"></div><span class="t" style="left:244.40px;top:181.96px;font-family:'Liberation Sans',sans-serif;font-size:10.5px;font-weight:700;letter-spacing:0.27px">WTDON</span><span class="t" style="left:240.70px;top:196.08px;font-family:'Liberation Sans',sans-serif;font-size:9.3px;color:#646464;letter-spacing:-0.12px">Enable watchdog</span><div style="left:24px;top:273px;width:596px;height:1px;background:#5a5a5a;"></div><span class="t" style="left:-164.50px;width:400px;text-align:center;top:240.32px;font-family:'Liberation Sans',sans-serif;font-size:11.5px;font-weight:700;letter-spacing:-0.25px">5</span><div class="cb" style="left:53px;top:231px"></div><span class="t" style="left:69.00px;top:227.96px;font-family:'Liberation Sans',sans-serif;font-size:10.5px;font-weight:700;letter-spacing:0.41px">SUT1</span><span class="t" style="left:65.80px;top:243.08px;font-family:'Liberation Sans',sans-serif;font-size:9.3px;color:#646464;letter-spacing:-0.02px">Select start-up time</span><div class="cb dis" style="left:228px;top:232px"><svg width="13" height="13" viewBox="0 0 13 13" style="position:absolute;left:-1px;top:-1px"><path d="M3.2 6.2 L5.3 9.6 L9.8 2.8" fill="none" stroke="#a9acb4" stroke-width="1.7" stroke-linecap="butt"/></svg></div><span class="t" style="left:244.40px;top:228.96px;font-family:'Liberation Sans',sans-serif;font-size:10.5px;font-weight:700;color:#8a8a8a;letter-spacing:0.08px">SPIEN</span><span class="t" style="left:240.70px;top:243.08px;font-family:'Liberation Sans',sans-serif;font-size:9.3px;color:#646464;letter-spacing:-0.13px">Enable Serial programming and Data</span><span class="t" style="left:240.70px;top:254.08px;font-family:'Liberation Sans',sans-serif;font-size:9.3px;color:#646464;letter-spacing:-0.03px">Downloading</span><div style="left:24px;top:274px;width:596px;height:46px;background:#f0fde0;"></div><div style="left:24px;top:320px;width:596px;height:1px;background:#5a5a5a;"></div><span class="t" style="left:-164.50px;width:400px;text-align:center;top:287.32px;font-family:'Liberation Sans',sans-serif;font-size:11.5px;font-weight:700;letter-spacing:-0.25px">4</span><div class="cb" style="left:53px;top:278px"><svg width="13" height="13" viewBox="0 0 13 13" style="position:absolute;left:-1px;top:-1px"><path d="M3.2 6.2 L5.3 9.6 L9.8 2.8" fill="none" stroke="#31347c" stroke-width="1.7" stroke-linecap="butt"/></svg></div><span class="t" style="left:69.00px;top:274.96px;font-family:'Liberation Sans',sans-serif;font-size:10.5px;font-weight:700;letter-spacing:0.41px">SUT0</span><span class="t" style="left:65.80px;top:290.08px;font-family:'Liberation Sans',sans-serif;font-size:9.3px;color:#646464;letter-spacing:-0.02px">Select start-up time</span><div class="cb" style="left:228px;top:279px"></div><span class="t" style="left:244.40px;top:275.96px;font-family:'Liberation Sans',sans-serif;font-size:10.5px;font-weight:700;letter-spacing:-0.29px">CKOPT</span><span class="t" style="left:240.70px;top:290.08px;font-family:'Liberation Sans',sans-serif;font-size:9.3px;color:#646464;letter-spacing:0.05px">Oscillator Options</span><div style="left:24px;top:367px;width:596px;height:1px;background:#5a5a5a;"></div><span class="t" style="left:-164.50px;width:400px;text-align:center;top:334.32px;font-family:'Liberation Sans',sans-serif;font-size:11.5px;font-weight:700;letter-spacing:-0.25px">3</span><div class="cb" style="left:53px;top:325px"><svg width="13" height="13" viewBox="0 0 13 13" style="position:absolute;left:-1px;top:-1px"><path d="M3.2 6.2 L5.3 9.6 L9.8 2.8" fill="none" stroke="#31347c" stroke-width="1.7" stroke-linecap="butt"/></svg></div><span class="t" style="left:69.00px;top:321.96px;font-family:'Liberation Sans',sans-serif;font-size:10.5px;font-weight:700;letter-spacing:-0.31px">CKSEL3</span><span class="t" style="left:65.80px;top:337.08px;font-family:'Liberation Sans',sans-serif;font-size:9.3px;color:#646464;letter-spacing:0.05px">Select Clock Source</span><div class="cb" style="left:228px;top:326px"></div><span class="t" style="left:244.40px;top:322.96px;font-family:'Liberation Sans',sans-serif;font-size:10.5px;font-weight:700;letter-spacing:-0.30px">EESAVE</span><span class="t" style="left:240.70px;top:337.08px;font-family:'Liberation Sans',sans-serif;font-size:9.3px;color:#646464;letter-spacing:-0.01px">EEPROM memory is preserved through</span><span class="t" style="left:240.70px;top:348.08px;font-family:'Liberation Sans',sans-serif;font-size:9.3px;color:#646464;letter-spacing:-0.16px">chip erase</span><div style="left:24px;top:368px;width:596px;height:46px;background:#f0fde0;"></div><div style="left:24px;top:414px;width:596px;height:1px;background:#5a5a5a;"></div><span class="t" style="left:-164.50px;width:400px;text-align:center;top:381.32px;font-family:'Liberation Sans',sans-serif;font-size:11.5px;font-weight:700;letter-spacing:-0.25px">2</span><div class="cb" style="left:53px;top:372px"></div><span class="t" style="left:69.00px;top:368.96px;font-family:'Liberation Sans',sans-serif;font-size:10.5px;font-weight:700;letter-spacing:-0.31px">CKSEL2</span><span class="t" style="left:65.80px;top:384.08px;font-family:'Liberation Sans',sans-serif;font-size:9.3px;color:#646464;letter-spacing:0.05px">Select Clock Source</span><div class="cb" style="left:228px;top:373px"><svg width="13" height="13" viewBox="0 0 13 13" style="position:absolute;left:-1px;top:-1px"><path d="M3.2 6.2 L5.3 9.6 L9.8 2.8" fill="none" stroke="#31347c" stroke-width="1.7" stroke-linecap="butt"/></svg></div><span class="t" style="left:244.40px;top:369.96px;font-family:'Liberation Sans',sans-serif;font-size:10.5px;font-weight:700;letter-spacing:0.12px">BOOTSZ1</span><span class="t" style="left:240.70px;top:384.08px;font-family:'Liberation Sans',sans-serif;font-size:9.3px;color:#646464;">Select Boot Size</span><div style="left:24px;top:461px;width:596px;height:1px;background:#5a5a5a;"></div><span class="t" style="left:-164.50px;width:400px;text-align:center;top:428.32px;font-family:'Liberation Sans',sans-serif;font-size:11.5px;font-weight:700;letter-spacing:-0.25px">1</span><div class="cb" style="left:53px;top:419px"><svg width="13" height="13" viewBox="0 0 13 13" style="position:absolute;left:-1px;top:-1px"><path d="M3.2 6.2 L5.3 9.6 L9.8 2.8" fill="none" stroke="#31347c" stroke-width="1.7" stroke-linecap="butt"/></svg></div><span class="t" style="left:69.00px;top:415.96px;font-family:'Liberation Sans',sans-serif;font-size:10.5px;font-weight:700;letter-spacing:-0.31px">CKSEL1</span><span class="t" style="left:65.80px;top:431.08px;font-family:'Liberation Sans',sans-serif;font-size:9.3px;color:#646464;letter-spacing:0.05px">Select Clock Source</span><div class="cb" style="left:228px;top:420px"><svg width="13" height="13" viewBox="0 0 13 13" style="position:absolute;left:-1px;top:-1px"><path d="M3.2 6.2 L5.3 9.6 L9.8 2.8" fill="none" stroke="#31347c" stroke-width="1.7" stroke-linecap="butt"/></svg></div><span class="t" style="left:244.40px;top:416.96px;font-family:'Liberation Sans',sans-serif;font-size:10.5px;font-weight:700;letter-spacing:0.12px">BOOTSZ0</span><span class="t" style="left:240.70px;top:431.08px;font-family:'Liberation Sans',sans-serif;font-size:9.3px;color:#646464;">Select Boot Size</span><div style="left:24px;top:462px;width:596px;height:46px;background:#f0fde0;"></div><span class="t" style="left:-164.50px;width:400px;text-align:center;top:475.32px;font-family:'Liberation Sans',sans-serif;font-size:11.5px;font-weight:700;letter-spacing:-0.25px">0</span><div class="cb" style="left:53px;top:466px"><svg width="13" height="13" viewBox="0 0 13 13" style="position:absolute;left:-1px;top:-1px"><path d="M3.2 6.2 L5.3 9.6 L9.8 2.8" fill="none" stroke="#31347c" stroke-width="1.7" stroke-linecap="butt"/></svg></div><span class="t" style="left:69.00px;top:462.96px;font-family:'Liberation Sans',sans-serif;font-size:10.5px;font-weight:700;letter-spacing:-0.31px">CKSEL0</span><span class="t" style="left:65.80px;top:478.08px;font-family:'Liberation Sans',sans-serif;font-size:9.3px;color:#646464;letter-spacing:0.05px">Select Clock Source</span><div class="cb" style="left:228px;top:467px"></div><span class="t" style="left:244.40px;top:463.96px;font-family:'Liberation Sans',sans-serif;font-size:10.5px;font-weight:700;letter-spacing:-0.05px">BOOTRST</span><span class="t" style="left:240.70px;top:478.08px;font-family:'Liberation Sans',sans-serif;font-size:9.3px;color:#646464;letter-spacing:0.03px">Select Reset Vector</span><div style="left:47px;top:106px;width:1px;height:402px;background:#686868;"></div><div style="left:222px;top:106px;width:1px;height:402px;background:#686868;"></div><div style="left:421px;top:106px;width:1px;height:402px;background:#686868;"></div><span class="t" style="left:28.20px;top:109.39px;font-family:'Liberation Sans',sans-serif;font-size:11px;font-weight:700;letter-spacing:0.11px">Bit</span><span class="t" style="left:58.30px;top:108.91px;font-family:'DejaVu Sans','Liberation Sans',sans-serif;font-size:12.7px;font-weight:700;letter-spacing:0.07px">Byte LOW</span><span class="t" style="left:233.50px;top:108.91px;font-family:'DejaVu Sans','Liberation Sans',sans-serif;font-size:12.7px;font-weight:700;letter-spacing:0.19px">Byte HIGH</span><span class="t" style="left:432.60px;top:108.91px;font-family:'DejaVu Sans','Liberation Sans',sans-serif;font-size:12.7px;font-weight:700;letter-spacing:-0.09px">Byte EXTENDED</span></div><div class="win" style="left:-1px;top:533px;width:726px;height:526px"><div class="winb" style="height:526px"></div><div class="gb" style="left:15px;top:15px;width:227px;height:49px;"></div><div style="left:22px;top:14px;width:166px;height:4px;background:#f4f4f4;"></div><span class="t" style="left:23.00px;top:6.19px;font-family:'Liberation Sans',sans-serif;font-size:11px;letter-spacing:-0.09px">[ Wybierz rodzaj operacji na AVR ]</span><div class="btn" style="left:25px;top:29px;width:143px;height:24px;"></div><span class="t" style="left:29.20px;top:32.17px;font-family:'DejaVu Sans','Liberation Sans',sans-serif;font-size:12.8px;">ATmega8</span><i class="arr" style="left:156px;top:40px"></i><div class="btn" style="left:174px;top:24px;width:57px;height:34px;"></div><span class="t" style="left:176.60px;top:24.69px;font-family:'Liberation Sans',sans-serif;font-size:11px;letter-spacing:-0.16px">ustawienia</span><span class="t" style="left:177.80px;top:37.69px;font-family:'Liberation Sans',sans-serif;font-size:11px;letter-spacing:-0.06px">fabryczne</span><span class="t" style="left:262.20px;top:9.72px;font-family:'Liberation Sans',sans-serif;font-size:11.5px;color:#1e90ff;letter-spacing:-0.04px">FLASH:</span><span class="t" style="left:316.40px;top:9.72px;font-family:'Liberation Sans',sans-serif;font-size:11.5px;color:#1e90ff;letter-spacing:-0.24px">8 192</span><span class="t" style="left:251.20px;top:22.82px;font-family:'Liberation Sans',sans-serif;font-size:11.5px;color:#1e90ff;letter-spacing:-0.29px">EEPROM:</span><span class="t" style="left:326.40px;top:22.82px;font-family:'Liberation Sans',sans-serif;font-size:11.5px;color:#1e90ff;letter-spacing:-0.53px">512</span><span class="t" style="left:249.60px;top:35.92px;font-family:'Liberation Sans',sans-serif;font-size:11.5px;color:#1e90ff;letter-spacing:0.29px">INT RAM:</span><span class="t" style="left:318.00px;top:35.92px;font-family:'Liberation Sans',sans-serif;font-size:11.5px;color:#1e90ff;letter-spacing:-0.56px">1 024</span><span class="t" style="left:247.60px;top:49.02px;font-family:'Liberation Sans',sans-serif;font-size:11.5px;color:#1e90ff;letter-spacing:0.06px">EXT RAM:</span><span class="t" style="left:338.00px;top:49.02px;font-family:'Liberation Sans',sans-serif;font-size:11.5px;color:#1e90ff;letter-spacing:-0.41px">0</span><div class="gb" style="left:351px;top:15px;width:292px;height:50px;"></div><div style="left:360.8px;top:14px;width:70.5px;height:4px;background:#f4f4f4;"></div><span class="t" style="left:361.80px;top:6.19px;font-family:'Liberation Sans',sans-serif;font-size:11px;letter-spacing:-0.10px">fuse i lock bity</span><span class="t" style="left:373.20px;top:20.14px;font-family:'Liberation Sans',sans-serif;font-size:9.7px;color:#303030;letter-spacing:-0.76px">LOW</span><span class="t" style="left:417.70px;top:20.14px;font-family:'Liberation Sans',sans-serif;font-size:9.7px;color:#303030;letter-spacing:-0.43px">HIGH</span><span class="t" style="left:450.30px;top:20.14px;font-family:'Liberation Sans',sans-serif;font-size:9.7px;color:#a8a8a8;letter-spacing:-0.23px">EXTENDED</span><span class="t" style="left:580.50px;top:20.14px;font-family:'Liberation Sans',sans-serif;font-size:9.7px;color:#727272;letter-spacing:-0.12px">LOCK BAJT</span><div class="hex" style="left:369px;top:37px;width:29px;height:21px;"></div><span class="t" style="left:357.60px;top:40.55px;font-family:'Liberation Sans',sans-serif;font-size:8.5px;color:#101010;letter-spacing:-0.14px">0x</span><span class="t" style="left:372.70px;top:37.37px;font-family:'DejaVu Sans','Liberation Sans',sans-serif;font-size:10.5px;font-weight:700;color:#ff00ff;letter-spacing:0.06px">E4</span><div class="hex" style="left:414px;top:37px;width:29px;height:21px;"></div><span class="t" style="left:402.60px;top:40.55px;font-family:'Liberation Sans',sans-serif;font-size:8.5px;color:#101010;letter-spacing:-0.14px">0x</span><span class="t" style="left:417.70px;top:37.37px;font-family:'DejaVu Sans','Liberation Sans',sans-serif;font-size:10.5px;font-weight:700;color:#ff00ff;letter-spacing:-0.72px">D9</span><div class="hex dis" style="left:461px;top:37px;width:29px;height:21px;"></div><span class="t" style="left:449.60px;top:40.55px;font-family:'Liberation Sans',sans-serif;font-size:8.5px;color:#a4a4a4;letter-spacing:-0.14px">0x</span><div class="hex" style="left:591px;top:37px;width:29px;height:21px;"></div><span class="t" style="left:579.60px;top:40.55px;font-family:'Liberation Sans',sans-serif;font-size:8.5px;color:#808080;letter-spacing:-0.14px">0x</span><span class="t" style="left:594.70px;top:37.37px;font-family:'DejaVu Sans','Liberation Sans',sans-serif;font-size:10.5px;font-weight:700;color:#008050;letter-spacing:-0.01px">00</span><div class="btn" style="left:508px;top:32px;width:59px;height:20px;"></div><span class="t" style="left:522.40px;top:32.19px;font-family:'Liberation Sans',sans-serif;font-size:11px;letter-spacing:0.05px">ustaw</span><svg style="position:absolute;left:645px;top:0px" width="80" height="72" viewBox="0 0 1173 1056">
<defs>
<linearGradient id="ltd" x1="0.45" y1="0" x2="0.55" y2="1"><stop offset="0" stop-color="#9dbcd8"/><stop offset="0.55" stop-color="#1e60f2"/><stop offset="1" stop-color="#9c9cff"/></linearGradient>
<linearGradient id="lfd" x1="0" y1="0" x2="1" y2="1"><stop offset="0" stop-color="#0050e6"/><stop offset="1" stop-color="#4a86f2"/></linearGradient>
<linearGradient id="ttd" x1="0.6" y1="0" x2="0.5" y2="1"><stop offset="0" stop-color="#9ee688"/><stop offset="1" stop-color="#b2ff52"/></linearGradient>
<linearGradient id="tsd" x1="0" y1="0" x2="1" y2="0.3"><stop offset="0" stop-color="#6ae020"/><stop offset="1" stop-color="#48c808"/></linearGradient>
<linearGradient id="btd" x1="0.7" y1="0" x2="0.25" y2="1"><stop offset="0" stop-color="#eeb088"/><stop offset="0.5" stop-color="#ff4400"/><stop offset="0.95" stop-color="#fff0e8"/></linearGradient>
<linearGradient id="brd" x1="1" y1="0" x2="0" y2="1"><stop offset="0" stop-color="#b8a400"/><stop offset="1" stop-color="#e86000"/></linearGradient>
<linearGradient id="bfd" x1="0" y1="0" x2="1" y2="1"><stop offset="0" stop-color="#e25400"/><stop offset="1" stop-color="#f28848"/></linearGradient>
<filter id="shd" x="-10%" y="-10%" width="120%" height="125%"><feGaussianBlur stdDeviation="14"/></filter>
</defs>
<path d="M110 470 L497 815 L620 985 L1018 640 L1012 560 L620 900 L497 790 Z" fill="#000" opacity="0.4" filter="url(#shd)"/>
<g stroke="#3b3320" stroke-opacity="0.75" stroke-width="9" stroke-linejoin="round">
<path d="M105 400 L497 748 L497 850 L105 508 Z" fill="url(#lfd)"/>
<path d="M497 748 L620 855 L620 960 L497 850 Z" fill="url(#bfd)"/>
<path d="M620 855 L1010 515 L1010 625 L620 960 Z" fill="url(#brd)"/>
<path d="M105 400 L360 185 L492 287 L358 403 L612 628 L497 748 Z" fill="url(#ltd)"/>
<path d="M500 515 L625 410 L755 515 L880 410 L1010 515 L620 855 L497 748 L612 628 Z" fill="url(#btd)"/>
<path d="M750 300 L905 185 L905 255 L812 338 Z" fill="url(#tsd)"/>
<path d="M360 400 L750 80 L905 185 L750 300 L880 410 L755 515 L625 410 L500 515 Z" fill="url(#ttd)"/>
</g>
<path d="M130 440 Q400 560 600 615 L497 730 Z" fill="#fff" opacity="0.18"/>
<path d="M520 525 Q760 650 990 530 L1010 515 L880 410 L755 515 L625 410 Z" fill="#fff" opacity="0.22"/>
</svg><div class="tabpanel" style="left:15px;top:97px;width:701px;height:420px;"></div><div class="tab" style="left:17px;top:72px;width:100px;height:25px;"></div><span class="t" style="left:25.70px;top:75.79px;font-family:'Liberation Sans',sans-serif;font-size:11px;letter-spacing:-0.21px">Fusy właściwości</span><div class="tab" style="left:117px;top:72px;width:100px;height:25px;"></div><span class="t" style="left:129.30px;top:75.79px;font-family:'Liberation Sans',sans-serif;font-size:11px;letter-spacing:-0.28px">Fusy manualnie</span><div class="tab" style="left:317px;top:72px;width:100px;height:25px;"></div><span class="t" style="left:345.05px;top:75.79px;font-family:'Liberation Sans',sans-serif;font-size:11px;letter-spacing:-0.12px">Lock bity</span><div class="tab" style="left:417px;top:72px;width:100px;height:25px;"></div><span class="t" style="left:424.90px;top:75.79px;font-family:'Liberation Sans',sans-serif;font-size:11px;letter-spacing:-0.19px">Programator AVR</span><div class="tab" style="left:517px;top:72px;width:100px;height:25px;"></div><span class="t" style="left:542.70px;top:75.79px;font-family:'Liberation Sans',sans-serif;font-size:11px;letter-spacing:-0.28px">Narzędzia</span><div class="tab" style="left:617px;top:72px;width:98px;height:25px;"></div><span class="t" style="left:640.35px;top:75.79px;font-family:'Liberation Sans',sans-serif;font-size:11px;letter-spacing:-0.21px">Ustawienia</span><div class="tab act" style="left:215px;top:70px;width:104px;height:28px;"></div><span class="t" style="left:223.30px;top:73.79px;font-family:'Liberation Sans',sans-serif;font-size:11px;letter-spacing:-0.22px">Fusy uproszczone</span><div class="gb" style="left:22px;top:113px;width:623px;height:239px;"></div><div style="left:29.2px;top:112px;width:222.5px;height:4px;background:#fff;"></div><span class="t" style="left:30.20px;top:104.19px;font-family:'Liberation Sans',sans-serif;font-size:11px;letter-spacing:-0.01px">[ Ustaw preferowane źródło taktowania AVR ]</span><div class="gb" style="left:65px;top:189px;width:174px;height:125px;"></div><div style="left:74.6px;top:188px;width:110.4px;height:4px;background:#fff;"></div><span class="t" style="left:75.60px;top:180.19px;font-family:'Liberation Sans',sans-serif;font-size:11px;">Wewnętrzny oscylator</span><div class="rb" style="left:81px;top:210px"></div><span class="t" style="left:100.70px;top:206.19px;font-family:'Liberation Sans',sans-serif;font-size:11px;letter-spacing:-0.76px">1 MHz</span><div class="rb" style="left:81px;top:233px"></div><span class="t" style="left:100.70px;top:229.19px;font-family:'Liberation Sans',sans-serif;font-size:11px;letter-spacing:-0.76px">2 MHz</span><div class="rb" style="left:81px;top:256px"></div><span class="t" style="left:100.70px;top:252.19px;font-family:'Liberation Sans',sans-serif;font-size:11px;letter-spacing:-0.76px">4 MHz</span><div class="rb on" style="left:81px;top:279px"></div><span class="t" style="left:100.70px;top:275.19px;font-family:'Liberation Sans',sans-serif;font-size:11px;letter-spacing:-0.76px">8 MHz</span><div class="gb" style="left:316px;top:166px;width:313px;height:163px;"></div><div style="left:325.4px;top:165px;width:91.6px;height:4px;background:#fff;"></div><span class="t" style="left:326.40px;top:156.59px;font-family:'Liberation Sans',sans-serif;font-size:11px;">Zewnętrzny kwarc</span><div class="rb" style="left:332px;top:186px"></div><span class="t" style="left:350.40px;top:182.19px;font-family:'Liberation Sans',sans-serif;font-size:11px;letter-spacing:-0.21px">0.4 MHz - 0.9 MHz</span><div class="rb" style="left:332px;top:209px"></div><span class="t" style="left:350.40px;top:205.19px;font-family:'Liberation Sans',sans-serif;font-size:11px;letter-spacing:-0.21px">0.9 MHz - 3.0 MHz</span><div class="rb" style="left:332px;top:232px"></div><span class="t" style="left:350.40px;top:228.19px;font-family:'Liberation Sans',sans-serif;font-size:11px;letter-spacing:-0.21px">3.0 MHz - 8.0 MHz</span><span class="t" style="left:450.60px;top:182.19px;font-family:'Liberation Sans',sans-serif;font-size:11px;letter-spacing:-0.04px">(tylko rezonator ceramiczny)</span><div style="left:332px;top:254px;width:279px;height:1px;background:#808080;"></div><div class="rb" style="left:332px;top:268px"></div><span class="t" style="left:351.60px;top:264.19px;font-family:'Liberation Sans',sans-serif;font-size:11px;letter-spacing:-0.47px">&gt; 8MHz</span><span class="t" style="left:477.70px;top:264.19px;font-family:'Liberation Sans',sans-serif;font-size:11px;letter-spacing:-0.27px">CKOPT opcja oscylatora</span><div class="cb" style="left:599px;top:267px"></div><span class="t" style="left:560.40px;top:283.88px;font-family:'Liberation Sans',sans-serif;font-size:9px;color:#7e8cb0;letter-spacing:-0.03px">Ustaw ten bit</span><span class="t" style="left:456.80px;top:299.88px;font-family:'Liberation Sans',sans-serif;font-size:9px;color:#7e8cb0;letter-spacing:-0.11px">gdy kwarc jest pomiędzy 8.0 - 16.0 MHz</span><span class="t" style="left:285.40px;top:362.19px;font-family:'Liberation Sans',sans-serif;font-size:11px;color:#787878;letter-spacing:-0.12px">Po dokonaniu ustawień, przejdź do zakładki "Programator AVR" i:</span><span class="t" style="left:285.40px;top:381.19px;font-family:'Liberation Sans',sans-serif;font-size:11px;color:#787878;letter-spacing:0.01px">1. wybierz programator</span><span class="t" style="left:285.40px;top:400.19px;font-family:'Liberation Sans',sans-serif;font-size:11px;color:#787878;letter-spacing:0.13px">2. wybierz port</span><span class="t" style="left:285.40px;top:419.19px;font-family:'Liberation Sans',sans-serif;font-size:11px;color:#b45a5a;letter-spacing:-0.09px">3. zaznacz pole wyboru Fuse bity</span><span class="t" style="left:285.40px;top:438.19px;font-family:'Liberation Sans',sans-serif;font-size:11px;color:#b45a5a;letter-spacing:-0.17px">4. zaznacz pole wyboru ZAPIS</span><span class="t" style="left:285.40px;top:476.19px;font-family:'Liberation Sans',sans-serif;font-size:11px;color:#787878;letter-spacing:-0.19px">5. wciśnij klawisz "WYKONAJ" aby zapisać fuse bity do AVR</span></div><div class="win" style="left:735px;top:531px;width:726px;height:526px"><div class="winb" style="height:526px"></div><div class="gb" style="left:15px;top:15px;width:227px;height:49px;"></div><div style="left:22px;top:14px;width:166px;height:4px;background:#f4f4f4;"></div><span class="t" style="left:23.00px;top:6.19px;font-family:'Liberation Sans',sans-serif;font-size:11px;letter-spacing:-0.09px">[ Wybierz rodzaj operacji na AVR ]</span><div class="btn" style="left:25px;top:29px;width:143px;height:24px;"></div><span class="t" style="left:29.20px;top:32.17px;font-family:'DejaVu Sans','Liberation Sans',sans-serif;font-size:12.8px;">ATmega8</span><i class="arr" style="left:156px;top:40px"></i><div class="btn" style="left:174px;top:24px;width:57px;height:34px;"></div><span class="t" style="left:176.60px;top:24.69px;font-family:'Liberation Sans',sans-serif;font-size:11px;letter-spacing:-0.16px">ustawienia</span><span class="t" style="left:177.80px;top:37.69px;font-family:'Liberation Sans',sans-serif;font-size:11px;letter-spacing:-0.06px">fabryczne</span><span class="t" style="left:262.20px;top:9.72px;font-family:'Liberation Sans',sans-serif;font-size:11.5px;color:#1e90ff;letter-spacing:-0.04px">FLASH:</span><span class="t" style="left:316.40px;top:9.72px;font-family:'Liberation Sans',sans-serif;font-size:11.5px;color:#1e90ff;letter-spacing:-0.24px">8 192</span><span class="t" style="left:251.20px;top:22.82px;font-family:'Liberation Sans',sans-serif;font-size:11.5px;color:#1e90ff;letter-spacing:-0.29px">EEPROM:</span><span class="t" style="left:326.40px;top:22.82px;font-family:'Liberation Sans',sans-serif;font-size:11.5px;color:#1e90ff;letter-spacing:-0.53px">512</span><span class="t" style="left:249.60px;top:35.92px;font-family:'Liberation Sans',sans-serif;font-size:11.5px;color:#1e90ff;letter-spacing:0.29px">INT RAM:</span><span class="t" style="left:318.00px;top:35.92px;font-family:'Liberation Sans',sans-serif;font-size:11.5px;color:#1e90ff;letter-spacing:-0.56px">1 024</span><span class="t" style="left:247.60px;top:49.02px;font-family:'Liberation Sans',sans-serif;font-size:11.5px;color:#1e90ff;letter-spacing:0.06px">EXT RAM:</span><span class="t" style="left:338.00px;top:49.02px;font-family:'Liberation Sans',sans-serif;font-size:11.5px;color:#1e90ff;letter-spacing:-0.41px">0</span><div class="gb" style="left:351px;top:15px;width:292px;height:50px;"></div><div style="left:360.8px;top:14px;width:70.5px;height:4px;background:#f4f4f4;"></div><span class="t" style="left:361.80px;top:6.19px;font-family:'Liberation Sans',sans-serif;font-size:11px;letter-spacing:-0.10px">fuse i lock bity</span><span class="t" style="left:373.20px;top:20.14px;font-family:'Liberation Sans',sans-serif;font-size:9.7px;color:#303030;letter-spacing:-0.76px">LOW</span><span class="t" style="left:417.70px;top:20.14px;font-family:'Liberation Sans',sans-serif;font-size:9.7px;color:#303030;letter-spacing:-0.43px">HIGH</span><span class="t" style="left:450.30px;top:20.14px;font-family:'Liberation Sans',sans-serif;font-size:9.7px;color:#a8a8a8;letter-spacing:-0.23px">EXTENDED</span><span class="t" style="left:580.50px;top:20.14px;font-family:'Liberation Sans',sans-serif;font-size:9.7px;color:#727272;letter-spacing:-0.12px">LOCK BAJT</span><div class="hex" style="left:369px;top:37px;width:29px;height:21px;"></div><span class="t" style="left:357.60px;top:40.55px;font-family:'Liberation Sans',sans-serif;font-size:8.5px;color:#101010;letter-spacing:-0.14px">0x</span><span class="t" style="left:372.70px;top:37.37px;font-family:'DejaVu Sans','Liberation Sans',sans-serif;font-size:10.5px;font-weight:700;color:#ff00ff;letter-spacing:0.06px">E4</span><div class="hex" style="left:414px;top:37px;width:29px;height:21px;"></div><span class="t" style="left:402.60px;top:40.55px;font-family:'Liberation Sans',sans-serif;font-size:8.5px;color:#101010;letter-spacing:-0.14px">0x</span><span class="t" style="left:417.70px;top:37.37px;font-family:'DejaVu Sans','Liberation Sans',sans-serif;font-size:10.5px;font-weight:700;color:#ff00ff;letter-spacing:-0.72px">D9</span><div class="hex dis" style="left:461px;top:37px;width:29px;height:21px;"></div><span class="t" style="left:449.60px;top:40.55px;font-family:'Liberation Sans',sans-serif;font-size:8.5px;color:#a4a4a4;letter-spacing:-0.14px">0x</span><div class="hex" style="left:591px;top:37px;width:29px;height:21px;"></div><span class="t" style="left:579.60px;top:40.55px;font-family:'Liberation Sans',sans-serif;font-size:8.5px;color:#808080;letter-spacing:-0.14px">0x</span><span class="t" style="left:594.70px;top:37.37px;font-family:'DejaVu Sans','Liberation Sans',sans-serif;font-size:10.5px;font-weight:700;color:#008050;letter-spacing:-0.01px">00</span><div class="btn" style="left:508px;top:32px;width:59px;height:20px;"></div><span class="t" style="left:522.40px;top:32.19px;font-family:'Liberation Sans',sans-serif;font-size:11px;letter-spacing:0.05px">ustaw</span><svg style="position:absolute;left:645px;top:0px" width="80" height="72" viewBox="0 0 1173 1056">
<defs>
<linearGradient id="lte" x1="0.45" y1="0" x2="0.55" y2="1"><stop offset="0" stop-color="#9dbcd8"/><stop offset="0.55" stop-color="#1e60f2"/><stop offset="1" stop-color="#9c9cff"/></linearGradient>
<linearGradient id="lfe" x1="0" y1="0" x2="1" y2="1"><stop offset="0" stop-color="#0050e6"/><stop offset="1" stop-color="#4a86f2"/></linearGradient>
<linearGradient id="tte" x1="0.6" y1="0" x2="0.5" y2="1"><stop offset="0" stop-color="#9ee688"/><stop offset="1" stop-color="#b2ff52"/></linearGradient>
<linearGradient id="tse" x1="0" y1="0" x2="1" y2="0.3"><stop offset="0" stop-color="#6ae020"/><stop offset="1" stop-color="#48c808"/></linearGradient>
<linearGradient id="bte" x1="0.7" y1="0" x2="0.25" y2="1"><stop offset="0" stop-color="#eeb088"/><stop offset="0.5" stop-color="#ff4400"/><stop offset="0.95" stop-color="#fff0e8"/></linearGradient>
<linearGradient id="bre" x1="1" y1="0" x2="0" y2="1"><stop offset="0" stop-color="#b8a400"/><stop offset="1" stop-color="#e86000"/></linearGradient>
<linearGradient id="bfe" x1="0" y1="0" x2="1" y2="1"><stop offset="0" stop-color="#e25400"/><stop offset="1" stop-color="#f28848"/></linearGradient>
<filter id="she" x="-10%" y="-10%" width="120%" height="125%"><feGaussianBlur stdDeviation="14"/></filter>
</defs>
<path d="M110 470 L497 815 L620 985 L1018 640 L1012 560 L620 900 L497 790 Z" fill="#000" opacity="0.4" filter="url(#she)"/>
<g stroke="#3b3320" stroke-opacity="0.75" stroke-width="9" stroke-linejoin="round">
<path d="M105 400 L497 748 L497 850 L105 508 Z" fill="url(#lfe)"/>
<path d="M497 748 L620 855 L620 960 L497 850 Z" fill="url(#bfe)"/>
<path d="M620 855 L1010 515 L1010 625 L620 960 Z" fill="url(#bre)"/>
<path d="M105 400 L360 185 L492 287 L358 403 L612 628 L497 748 Z" fill="url(#lte)"/>
<path d="M500 515 L625 410 L755 515 L880 410 L1010 515 L620 855 L497 748 L612 628 Z" fill="url(#bte)"/>
<path d="M750 300 L905 185 L905 255 L812 338 Z" fill="url(#tse)"/>
<path d="M360 400 L750 80 L905 185 L750 300 L880 410 L755 515 L625 410 L500 515 Z" fill="url(#tte)"/>
</g>
<path d="M130 440 Q400 560 600 615 L497 730 Z" fill="#fff" opacity="0.18"/>
<path d="M520 525 Q760 650 990 530 L1010 515 L880 410 L755 515 L625 410 Z" fill="#fff" opacity="0.22"/>
</svg><div class="tabpanel" style="left:15px;top:97px;width:701px;height:420px;"></div><div class="tab" style="left:17px;top:72px;width:100px;height:25px;"></div><span class="t" style="left:25.70px;top:75.79px;font-family:'Liberation Sans',sans-serif;font-size:11px;letter-spacing:-0.21px">Fusy właściwości</span><div class="tab" style="left:117px;top:72px;width:100px;height:25px;"></div><span class="t" style="left:129.30px;top:75.79px;font-family:'Liberation Sans',sans-serif;font-size:11px;letter-spacing:-0.28px">Fusy manualnie</span><div class="tab" style="left:217px;top:72px;width:100px;height:25px;"></div><span class="t" style="left:223.30px;top:75.79px;font-family:'Liberation Sans',sans-serif;font-size:11px;letter-spacing:-0.22px">Fusy uproszczone</span><div class="tab" style="left:417px;top:72px;width:100px;height:25px;"></div><span class="t" style="left:424.90px;top:75.79px;font-family:'Liberation Sans',sans-serif;font-size:11px;letter-spacing:-0.19px">Programator AVR</span><div class="tab" style="left:517px;top:72px;width:100px;height:25px;"></div><span class="t" style="left:542.70px;top:75.79px;font-family:'Liberation Sans',sans-serif;font-size:11px;letter-spacing:-0.28px">Narzędzia</span><div class="tab" style="left:617px;top:72px;width:98px;height:25px;"></div><span class="t" style="left:640.35px;top:75.79px;font-family:'Liberation Sans',sans-serif;font-size:11px;letter-spacing:-0.21px">Ustawienia</span><div class="tab act" style="left:315px;top:70px;width:104px;height:28px;"></div><span class="t" style="left:345.05px;top:73.79px;font-family:'Liberation Sans',sans-serif;font-size:11px;letter-spacing:-0.12px">Lock bity</span><div style="left:22px;top:105px;width:621px;height:166px;border:1px solid #696969;background:#f7fff0;box-sizing:border-box;"></div><div style="left:23px;top:106px;width:619px;height:31px;background:#efffdf;"></div><div style="left:23px;top:168px;width:619px;height:31px;background:#efffdf;"></div><div class="btn" style="left:28px;top:112px;width:307px;height:21px;"></div><span class="t" style="left:31.40px;top:113.39px;font-family:'Liberation Sans',sans-serif;font-size:11px;letter-spacing:-0.10px">Mode 3: Further programming and verification disabled</span><i class="arr" style="left:323px;top:121px"></i><div class="btn" style="left:28px;top:143px;width:413px;height:21px;"></div><span class="t" style="left:31.40px;top:144.39px;font-family:'Liberation Sans',sans-serif;font-size:11px;letter-spacing:-0.21px">Application Protection Mode 3: LPM and SPM prohibited in Application Section</span><i class="arr" style="left:429px;top:152px"></i><div class="btn" style="left:28px;top:174px;width:425px;height:21px;"></div><span class="t" style="left:31.40px;top:175.39px;font-family:'Liberation Sans',sans-serif;font-size:11px;letter-spacing:-0.21px">Boot Loader Protection Mode 3: LPM and SPM prohibited in Boot Loader Section</span><i class="arr" style="left:441px;top:183px"></i></div><div style="left:732px;top:518px;width:314px;height:10px;background:linear-gradient(90deg,#00244f 0,#0050a8 7px,#006fde 14px,#0072e2 25%,#0060c8 60%,#0050ac 100%)"></div>
<svg style="left:962px;top:518px" width="25" height="10" viewBox="0 0 25 10"><path d="M1 1.2 L22.5 5 L23.6 10 L1 10 Z" fill="#fbeea4"/><path d="M3 2.2 L22.5 5.4 L23.4 10 L19 10 C 15 6 9 4 3 2.2 Z" fill="#e8d07c"/><path d="M12 8 L16 7 L17.5 10 L13 10 Z" fill="#e8e8ec"/></svg>
<div style="left:730px;top:1055px;width:736px;height:1px;background:#fff"></div>
</body></html>
